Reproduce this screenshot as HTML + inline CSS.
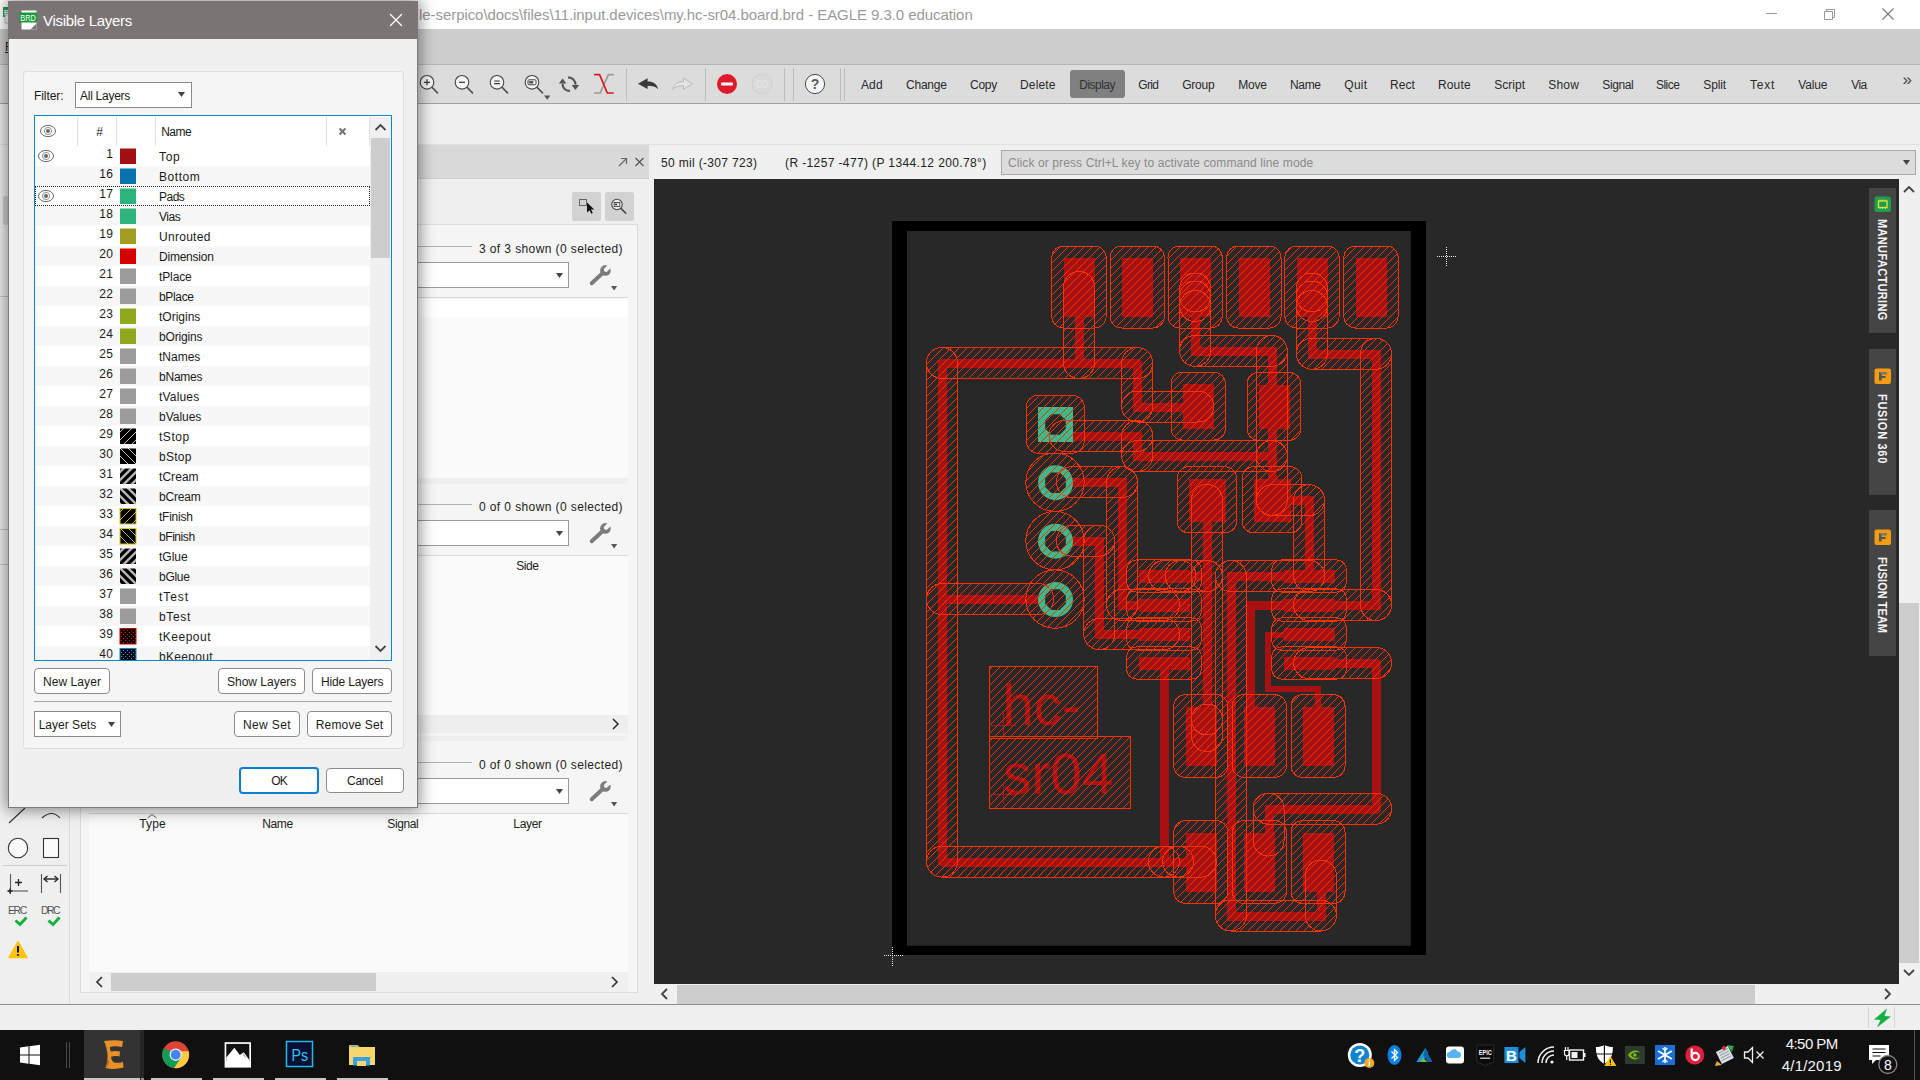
<!DOCTYPE html>
<html><head><meta charset="utf-8"><title>EAGLE</title>
<style>
html,body{margin:0;padding:0;width:1920px;height:1080px;overflow:hidden;background:#efefef;font-family:"Liberation Sans",sans-serif;}
.t{position:absolute;white-space:pre;}
.r{position:absolute;box-sizing:border-box;}
svg{position:absolute;overflow:visible;}
</style></head><body>
<div class="r" style="left:0px;top:0px;width:1920px;height:29px;background:#ffffff;"></div>
<svg style="left:0;top:4.500px" width="9" height="20"><rect x="3" y="2" width="8" height="10" fill="#2f9e4a"/><rect x="5" y="10" width="6" height="8" fill="#fff" stroke="#999" stroke-width="0.6"/><text x="4" y="10" font-size="7" fill="#fff" font-family="Liberation Sans" font-weight="bold">B</text></svg>
<div class="t" style="left:419.0px;top:4.0px;font-size:15px;line-height:21px;letter-spacing:-0.063px;color:#9a9a9a;font-weight:normal;">le-serpico\docs\files\11.input.devices\my.hc-sr04.board.brd - EAGLE 9.3.0 education</div>
<svg style="left:1750px;top:0" width="170" height="29"><path d="M16 13.5h11" stroke="#999" stroke-width="1" fill="none"/><path d="M74.5 11.5h8v8h-8z M76.5 11.5v-2h8v8h-2" stroke="#999" stroke-width="1" fill="none"/><path d="M132.5 8.5l11 11M143.5 8.5l-11 11" stroke="#777" stroke-width="1.1" fill="none"/></svg>
<div class="r" style="left:0px;top:29px;width:1920px;height:35px;background:#cdcdcd;"></div>
<div class="t" style="left:5.0px;top:39.3px;font-size:12px;line-height:17px;letter-spacing:-0.344px;color:#222;font-weight:normal;text-decoration:underline;">F</div>
<div class="r" style="left:0px;top:64px;width:1920px;height:1px;background:#b4b4b4;"></div>
<div class="r" style="left:0px;top:65px;width:1920px;height:38px;background:#dcdcdc;"></div>
<div class="r" style="left:0px;top:103px;width:1920px;height:1px;background:#a0a0a0;"></div>
<div class="r" style="left:0px;top:104px;width:1920px;height:41px;background:#efefef;"></div>
<div class="r" style="left:0px;top:144px;width:1920px;height:1px;background:#e2e2e2;"></div>
<svg style="left:0;top:0" width="1920" height="110"><g transform="translate(429.5,84.8)"><circle cx="-2.500" cy="-2.500" r="6.800" fill="#f4f4f4" stroke="#444" stroke-width="1.100"/><path d="M2.600 2.600L8 8" stroke="#555" stroke-width="1.700" stroke-linecap="round"/><path d="M-5.500 -2.500h6M-2.500 -5.500v6" stroke="#333" stroke-width="1.200"/></g><g transform="translate(464.5,84.8)"><circle cx="-2.500" cy="-2.500" r="6.800" fill="#f4f4f4" stroke="#444" stroke-width="1.100"/><path d="M2.600 2.600L8 8" stroke="#555" stroke-width="1.700" stroke-linecap="round"/><path d="M-5.500 -2.500h6" stroke="#333" stroke-width="1.200"/></g><g transform="translate(499.5,84.8)"><circle cx="-2.500" cy="-2.500" r="6.800" fill="#f4f4f4" stroke="#444" stroke-width="1.100"/><path d="M2.600 2.600L8 8" stroke="#555" stroke-width="1.700" stroke-linecap="round"/><path d="M-5.300 -3.800h5.600M-5.300 -1.200h5.600" stroke="#333" stroke-width="1.200"/></g><g transform="translate(534.5,84.8)"><circle cx="-2.500" cy="-2.500" r="6.800" fill="#f4f4f4" stroke="#444" stroke-width="1.100"/><path d="M2.600 2.600L8 8" stroke="#555" stroke-width="1.700" stroke-linecap="round"/><rect x="-6.500" y="-5" width="8" height="5" rx="1" fill="none" stroke="#444" stroke-width="1"/><rect x="-5.300" y="-3.800" width="4" height="2.600" fill="#555"/></g><path d="M544 95.500l3.200 4.200 3.200-4.200z" fill="#555"/><g transform="translate(569,84.200)" fill="none" stroke="#555" stroke-width="2.100"><path d="M1 6.600A6.600 6.600 0 0 1 -6.400 -0.500"/><path d="M-1 -6.600A6.600 6.600 0 0 1 6.400 0.500"/><path d="M-10.200 -0.800h7.600l-3.800 -5z" fill="#555" stroke="none"/><path d="M2.600 0.800h7.600l-3.800 5z" fill="#555" stroke="none"/></g><g fill="none" stroke-width="1.700"><path d="M613.800 74.700h-5.400l-8.200 18.300h-6.100" stroke="#9a9a9a"/><path d="M594.100 74.700h5.500l7.700 18.300h6.500" stroke="#d61a1a"/></g><path d="M626.5 68v33" stroke="#bdbdbd" stroke-width="1"/><path d="M705.5 68v33" stroke="#bdbdbd" stroke-width="1"/><path d="M784.5 68v33" stroke="#bdbdbd" stroke-width="1"/><path d="M793.5 68v33" stroke="#bdbdbd" stroke-width="1"/><path d="M840.5 68v33" stroke="#bdbdbd" stroke-width="1"/><path d="M844.5 68v33" stroke="#bdbdbd" stroke-width="1"/><path d="M638 83.700L647.600 78.300V81.500C653.500 81.500 657 84 658.200 89.300C655.500 86.500 652.500 85.800 647.600 85.800V89.100Z" fill="#3a3a3a"/><path d="M692.500 83.700L683.500 78.300V81.500C677.600 81.500 674.100 84 672.900 89.300C675.600 86.500 678.600 85.800 683.500 85.800V89.100Z" fill="#e4e4e4" stroke="#b5b5b5" stroke-width="0.900"/><circle cx="727" cy="84" r="10" fill="#e0192d"/><rect x="721" y="82.600" width="12" height="3" rx="1" fill="#fff"/><circle cx="762" cy="84" r="10" fill="#d9d9d9" stroke="#d0d0d0"/><text x="762" y="88" font-size="10.500" text-anchor="middle" fill="#e8e8e8" font-family="Liberation Sans" textLength="12" lengthAdjust="spacingAndGlyphs">GO</text><circle cx="815" cy="84" r="9.600" fill="#f6f6f6" stroke="#4a4a4a" stroke-width="1"/><text x="815" y="89" font-size="14" font-weight="bold" text-anchor="middle" fill="#5a5a5a" font-family="Liberation Sans">?</text></svg>
<div class="r" style="left:1070px;top:70px;width:55px;height:28px;background:#808080;border-radius:3px;"></div>
<div class="t" style="left:861.0px;top:76.8px;font-size:12px;line-height:17px;letter-spacing:0.114px;color:#2a2a2a;font-weight:normal;">Add</div>
<div class="t" style="left:906.0px;top:76.8px;font-size:12px;line-height:17px;letter-spacing:-0.224px;color:#2a2a2a;font-weight:normal;">Change</div>
<div class="t" style="left:970.0px;top:76.8px;font-size:12px;line-height:17px;letter-spacing:-0.254px;color:#2a2a2a;font-weight:normal;">Copy</div>
<div class="t" style="left:1020.0px;top:76.8px;font-size:12px;line-height:17px;letter-spacing:0.169px;color:#2a2a2a;font-weight:normal;">Delete</div>
<div class="t" style="left:1079.3px;top:76.8px;font-size:12px;line-height:17px;letter-spacing:-0.523px;color:#333;font-weight:normal;">Display</div>
<div class="t" style="left:1138.3px;top:76.8px;font-size:12px;line-height:17px;letter-spacing:-0.668px;color:#2a2a2a;font-weight:normal;">Grid</div>
<div class="t" style="left:1182.3px;top:76.8px;font-size:12px;line-height:17px;letter-spacing:-0.272px;color:#2a2a2a;font-weight:normal;">Group</div>
<div class="t" style="left:1238.3px;top:76.8px;font-size:12px;line-height:17px;letter-spacing:-0.236px;color:#2a2a2a;font-weight:normal;">Move</div>
<div class="t" style="left:1290.0px;top:76.8px;font-size:12px;line-height:17px;letter-spacing:-0.329px;color:#2a2a2a;font-weight:normal;">Name</div>
<div class="t" style="left:1344.3px;top:76.8px;font-size:12px;line-height:17px;letter-spacing:0.246px;color:#2a2a2a;font-weight:normal;">Quit</div>
<div class="t" style="left:1390.0px;top:76.8px;font-size:12px;line-height:17px;letter-spacing:0.078px;color:#2a2a2a;font-weight:normal;">Rect</div>
<div class="t" style="left:1438.0px;top:76.8px;font-size:12px;line-height:17px;letter-spacing:0.134px;color:#2a2a2a;font-weight:normal;">Route</div>
<div class="t" style="left:1494.3px;top:76.8px;font-size:12px;line-height:17px;letter-spacing:0.002px;color:#2a2a2a;font-weight:normal;">Script</div>
<div class="t" style="left:1548.3px;top:76.8px;font-size:12px;line-height:17px;letter-spacing:0.167px;color:#2a2a2a;font-weight:normal;">Show</div>
<div class="t" style="left:1602.3px;top:76.8px;font-size:12px;line-height:17px;letter-spacing:-0.393px;color:#2a2a2a;font-weight:normal;">Signal</div>
<div class="t" style="left:1656.0px;top:76.8px;font-size:12px;line-height:17px;letter-spacing:-0.543px;color:#2a2a2a;font-weight:normal;">Slice</div>
<div class="t" style="left:1703.3px;top:76.8px;font-size:12px;line-height:17px;letter-spacing:-0.129px;color:#2a2a2a;font-weight:normal;">Split</div>
<div class="t" style="left:1750.0px;top:76.8px;font-size:12px;line-height:17px;letter-spacing:0.746px;color:#2a2a2a;font-weight:normal;">Text</div>
<div class="t" style="left:1798.3px;top:76.8px;font-size:12px;line-height:17px;letter-spacing:-0.163px;color:#2a2a2a;font-weight:normal;">Value</div>
<div class="t" style="left:1851.3px;top:76.8px;font-size:12px;line-height:17px;letter-spacing:-0.580px;color:#2a2a2a;font-weight:normal;">Via</div>
<div class="t" style="left:1902.5px;top:68.3px;font-size:17px;line-height:24px;letter-spacing:-0.969px;color:#444;font-weight:normal;">»</div>
<div class="r" style="left:0px;top:145px;width:70px;height:860px;background:#efefef;"></div>
<div class="r" style="left:69px;top:145px;width:1px;height:860px;background:#dadada;"></div>
<div class="r" style="left:0px;top:529px;width:8px;height:1px;background:#c8c8c8;"></div>
<div class="r" style="left:0px;top:564px;width:8px;height:1px;background:#c8c8c8;"></div>
<div class="r" style="left:3px;top:196px;width:5px;height:29px;background:#d0d0d0;border-radius:2px;"></div>
<div class="r" style="left:0px;top:296px;width:8px;height:1px;background:#c8c8c8;"></div>
<svg style="left:0;top:790px" width="70" height="200" fill="none" stroke="#333" stroke-width="1.1"><path d="M9 33L25 18"/><path d="M42 28q10 -9 18 0"/><circle cx="18" cy="58" r="9.700" fill="#fafafa"/><rect x="43.500" y="48.500" width="15" height="19" fill="#fafafa"/><path d="M3 75.500h64" stroke="#cfcfcf"/><path d="M10.500 84v20" stroke="#555"/><path d="M8 101h20" stroke="#555"/><path d="M15 92.500h7M18.500 89v7" stroke="#222" stroke-width="1.300"/><path d="M7.500 101h5M10 98.500v5" stroke="#222" stroke-width="1.300"/><path d="M41.500 84v19M60.500 84v19" stroke="#555"/><path d="M44 89h14" stroke="#222" stroke-width="1.400"/><path d="M47.500 86l-3.500 3 3.500 3M54.500 86l3.500 3-3.500 3" stroke="#222" stroke-width="1.300"/><path d="M15.500 130.500l4.500 4 6.500-7" stroke="#12b23f" stroke-width="3"/><path d="M48.500 130.500l4.500 4 6.500-7" stroke="#12b23f" stroke-width="3"/><path d="M18 151.500l9 16h-18z" fill="#ffc20e" stroke="#ffc20e" stroke-width="1.500" stroke-linejoin="round"/><path d="M18 156v6.500" stroke="#111" stroke-width="2"/><circle cx="18" cy="165" r="1.100" fill="#111" stroke="none"/></svg>
<div class="t" style="left:8.0px;top:903.3px;font-size:10.5px;line-height:15px;letter-spacing:-1.391px;color:#555;font-weight:normal;">ERC</div>
<div class="t" style="left:41.0px;top:903.3px;font-size:10.5px;line-height:15px;letter-spacing:-1.583px;color:#555;font-weight:normal;">DRC</div>
<div class="r" style="left:70px;top:145px;width:584px;height:860px;background:#efefef;"></div>
<div class="r" style="left:70px;top:145px;width:579px;height:33px;background:#d9d9d9;"></div>
<div class="r" style="left:70px;top:178px;width:579px;height:1px;background:#cfcfcf;"></div>
<svg style="left:615px;top:154px" width="34" height="16" fill="none" stroke="#666" stroke-width="1.200"><path d="M4 12l7.500-7.500M6 4.500h5.500v5.500"/><path d="M20.500 4l8 8M28.500 4l-8 8" stroke="#555"/></svg>
<div class="r" style="left:80px;top:224px;width:558px;height:769px;background:#f5f5f5;border:1px solid #dcdcdc;"></div>
<div class="r" style="left:572px;top:192px;width:29px;height:29px;background:#d2d2d2;border-radius:2px;"></div>
<div class="r" style="left:605px;top:192px;width:29px;height:29px;background:#d2d2d2;border-radius:2px;"></div>
<svg style="left:572px;top:192px" width="62" height="29"><rect x="7.500" y="7.500" width="7" height="6" fill="none" stroke="#666"/><path d="M15 10.500v10l2.500-2.300 1.800 3.600 1.500-.8-1.800-3.400h3.300z" fill="#111"/><g transform="translate(47,14.500) scale(0.800)"><circle cx="-2.500" cy="-2.500" r="6.600" fill="#e8e8e8" stroke="#444" stroke-width="1.300"/><path d="M2.600 2.600L8.500 8.500" stroke="#444" stroke-width="2" stroke-linecap="round"/><rect x="-6" y="-5" width="7" height="5" fill="none" stroke="#333" stroke-width="1"/><rect x="-4.800" y="-3.600" width="2.400" height="2" fill="#333"/></g></svg>
<div class="r" style="left:418px;top:246px;width:54px;height:1px;background:#b0b0b0;"></div>
<div class="t" style="left:479.0px;top:240.9px;font-size:12px;line-height:17px;letter-spacing:0.397px;color:#222;font-weight:normal;">3 of 3 shown (0 selected)</div>
<div class="r" style="left:80px;top:261.5px;width:489px;height:26px;background:#ffffff;border:1px solid #9a9a9a;"></div>
<svg style="left:555px;top:272px" width="10" height="8"><path d="M1 1h7l-3.500 5z" fill="#444"/></svg>
<svg style="left:588px;top:264px" width="30" height="30"><g><path d="M3.700 19.300L15 8.800" stroke="#7c7c7c" stroke-width="3.900" stroke-linecap="round"/><circle cx="17.400" cy="6.400" r="5.300" fill="#7c7c7c"/><path transform="translate(17.400,6.400) rotate(-45)" d="M0.800 -2.100H8V2.100H0.800A2.100 2.100 0 0 1 0.800 -2.100Z" fill="#f5f5f5"/><path d="M23 22h6.200l-3.100 4.400z" fill="#555"/></g></svg>
<div class="r" style="left:89px;top:296.5px;width:539px;height:181px;background:#fafafa;border-top:1px solid #d8d8d8;"></div>
<div class="r" style="left:89px;top:298.5px;width:539px;height:18px;background:#ffffff;"></div>
<div class="r" style="left:89px;top:477.5px;width:539px;height:6px;background:#efefef;"></div>
<div class="r" style="left:418px;top:504px;width:54px;height:1px;background:#b0b0b0;"></div>
<div class="t" style="left:479.0px;top:498.9px;font-size:12px;line-height:17px;letter-spacing:0.397px;color:#222;font-weight:normal;">0 of 0 shown (0 selected)</div>
<div class="r" style="left:80px;top:519.5px;width:489px;height:26px;background:#ffffff;border:1px solid #9a9a9a;"></div>
<svg style="left:555px;top:530px" width="10" height="8"><path d="M1 1h7l-3.500 5z" fill="#444"/></svg>
<svg style="left:588px;top:522px" width="30" height="30"><g><path d="M3.700 19.300L15 8.800" stroke="#7c7c7c" stroke-width="3.900" stroke-linecap="round"/><circle cx="17.400" cy="6.400" r="5.300" fill="#7c7c7c"/><path transform="translate(17.400,6.400) rotate(-45)" d="M0.800 -2.100H8V2.100H0.800A2.100 2.100 0 0 1 0.800 -2.100Z" fill="#f5f5f5"/><path d="M23 22h6.200l-3.100 4.400z" fill="#555"/></g></svg>
<div class="r" style="left:89px;top:555px;width:539px;height:160px;background:#fafafa;border-top:1px solid #d8d8d8;"></div>
<div class="t" style="left:516.3px;top:557.6px;font-size:12px;line-height:17px;letter-spacing:-0.458px;color:#222;font-weight:normal;">Side</div>
<div class="r" style="left:89px;top:715px;width:539px;height:18px;background:#eeeeee;"></div>
<svg style="left:610px;top:717px" width="12" height="14"><path d="M3 2l5 5-5 5" fill="none" stroke="#333" stroke-width="1.600"/></svg>
<div class="r" style="left:89px;top:735.5px;width:539px;height:5px;background:#efefef;"></div>
<div class="r" style="left:418px;top:762px;width:54px;height:1px;background:#b0b0b0;"></div>
<div class="t" style="left:479.0px;top:756.9px;font-size:12px;line-height:17px;letter-spacing:0.397px;color:#222;font-weight:normal;">0 of 0 shown (0 selected)</div>
<div class="r" style="left:80px;top:777.5px;width:489px;height:26px;background:#ffffff;border:1px solid #9a9a9a;"></div>
<svg style="left:555px;top:788px" width="10" height="8"><path d="M1 1h7l-3.500 5z" fill="#444"/></svg>
<svg style="left:588px;top:780px" width="30" height="30"><g><path d="M3.700 19.300L15 8.800" stroke="#7c7c7c" stroke-width="3.900" stroke-linecap="round"/><circle cx="17.400" cy="6.400" r="5.300" fill="#7c7c7c"/><path transform="translate(17.400,6.400) rotate(-45)" d="M0.800 -2.100H8V2.100H0.800A2.100 2.100 0 0 1 0.800 -2.100Z" fill="#f5f5f5"/><path d="M23 22h6.200l-3.100 4.400z" fill="#555"/></g></svg>
<div class="r" style="left:89px;top:813px;width:539px;height:159px;background:#fafafa;border-top:1px solid #d8d8d8;"></div>
<div class="t" style="left:139.3px;top:816.3px;font-size:12px;line-height:17px;letter-spacing:0.096px;color:#222;font-weight:normal;">Type</div>
<svg style="left:146px;top:813px" width="12" height="6"><path d="M1.500 5l4.500-3.500 4.500 3.500" fill="none" stroke="#555" stroke-width="0.900"/></svg>
<div class="t" style="left:262.3px;top:816.3px;font-size:12px;line-height:17px;letter-spacing:-0.404px;color:#222;font-weight:normal;">Name</div>
<div class="t" style="left:387.3px;top:816.3px;font-size:12px;line-height:17px;letter-spacing:-0.393px;color:#222;font-weight:normal;">Signal</div>
<div class="t" style="left:513.3px;top:816.3px;font-size:12px;line-height:17px;letter-spacing:-0.326px;color:#222;font-weight:normal;">Layer</div>
<div class="r" style="left:89px;top:972px;width:539px;height:20px;background:#f0f0f0;"></div>
<div class="r" style="left:111px;top:973px;width:265px;height:18px;background:#cdcdcd;"></div>
<svg style="left:92px;top:974px" width="534" height="16" fill="none" stroke="#333" stroke-width="1.700"><path d="M10 3l-5 5 5 5"/><path d="M520 3l5 5-5 5"/></svg>
<div class="r" style="left:649px;top:145px;width:1271px;height:34px;background:#f0f0f0;"></div>
<div class="t" style="left:661.0px;top:154.8px;font-size:12px;line-height:17px;letter-spacing:0.328px;color:#222;font-weight:normal;">50 mil (-307 723)</div>
<div class="t" style="left:785.0px;top:154.8px;font-size:12px;line-height:17px;letter-spacing:0.382px;color:#222;font-weight:normal;">(R -1257 -477) (P 1344.12 200.78°)</div>
<div class="r" style="left:1001px;top:149.5px;width:915px;height:25px;background:#dcdcdc;border:1px solid #a9a9a9;"></div>
<div class="t" style="left:1008.0px;top:154.8px;font-size:12px;line-height:17px;letter-spacing:0.108px;color:#8a8a8a;font-weight:normal;">Click or press Ctrl+L key to activate command line mode</div>
<svg style="left:1902px;top:159px" width="10" height="8"><path d="M1 1h7l-3.500 5z" fill="#444"/></svg>
<div class="r" style="left:1899px;top:179px;width:21px;height:805px;background:#f0f0f0;"></div>
<div class="r" style="left:1899px;top:603px;width:20px;height:360px;background:#cdcdcd;"></div>
<svg style="left:1899px;top:179px" width="21" height="805" fill="none" stroke="#444" stroke-width="1.800"><path d="M5 13l5-5 5 5"/><path d="M5 791l5 5 5-5"/></svg>
<div class="r" style="left:654px;top:984px;width:1266px;height:21px;background:#f0f0f0;"></div>
<div class="r" style="left:677px;top:985px;width:1078px;height:19px;background:#cdcdcd;"></div>
<svg style="left:654px;top:984px" width="1245" height="21" fill="none" stroke="#444" stroke-width="1.800"><path d="M13 5l-5 5 5 5"/><path d="M1231 5l5 5-5 5"/></svg>
<div class="r" style="left:0px;top:1004px;width:1920px;height:1px;background:#8e8e8e;"></div>
<div class="r" style="left:0px;top:1005px;width:1920px;height:25px;background:#efefef;"></div>
<div class="r" style="left:1868px;top:1007px;width:1px;height:21px;background:#d5d5d5;"></div>
<div class="r" style="left:1894px;top:1007px;width:1px;height:21px;background:#d5d5d5;"></div>
<svg style="left:1872px;top:1007px" width="22" height="22"><path d="M15 1.500L2 12.500l6.500 0.500-3.500 7.500L19 9.500l-6.500-0.500z" fill="#12b23f"/></svg>
<div class="r" style="left:0px;top:1030px;width:1920px;height:50px;background:#101010;"></div>
<div class="r" style="left:84px;top:1030px;width:56px;height:50px;background:#333333;"></div>
<div class="r" style="left:140px;top:1030px;width:4px;height:50px;background:#262626;"></div>
<div class="r" style="left:84px;top:1077.5px;width:56px;height:2.5px;background:#cdc3c3;"></div>
<div class="r" style="left:141px;top:1077.5px;width:3px;height:2.5px;background:#9a9292;"></div>
<div class="r" style="left:151px;top:1077.5px;width:51px;height:2.5px;background:#cdc3c3;"></div>
<div class="r" style="left:213px;top:1077.5px;width:51px;height:2.5px;background:#cdc3c3;"></div>
<div class="r" style="left:275px;top:1077.5px;width:51px;height:2.5px;background:#cdc3c3;"></div>
<div class="r" style="left:337px;top:1077.5px;width:51px;height:2.5px;background:#cdc3c3;"></div>
<div class="r" style="left:66px;top:1042px;width:1px;height:26px;background:#4a4a4a;"></div>
<div class="r" style="left:69px;top:1042px;width:1px;height:26px;background:#4a4a4a;"></div>
<svg style="left:0;top:1030px" width="420" height="50"><path d="M20 17.500l8.500-1.200v8.200h-8.500z M29.500 16.200l10.500-1.500v9.800h-10.500z M20 25.500h8.500v8.200l-8.500-1.200z M29.500 25.500h10.500v9.800l-10.500-1.500z" fill="#fff"/><path d="M104 11c7-1 13-1 19 0l-1 6c-5-1-9-1-12 0 0 2 0 3 1 4.500 3-.8 6-.8 9 0l-.5 5c-3-.6-6-.6-8.500.2 .3 2.500 1 4 2.500 5.500 3 1 6 .8 9.500-.2l.5 5.500c-6 1.800-12 2-18 .5 3-8 3-18-1.500-27z" fill="#e8912a"/><path d="M104 11c4.500 9 4.500 19 1.500 27 2-1 3-3 3.500-6-2-6-2-13-5-21z" fill="#b5651a"/><g transform="translate(175.700,24.700)"><circle r="13.500" fill="#db4437"/><path d="M0 0L-11.700 -6.750A13.500 13.500 0 0 0 -1.500 13.400L5.200 3z" fill="#0f9d58"/><path d="M0 0L5.200 3 -1.500 13.400A13.500 13.500 0 0 0 13 -3.500L0 -3.500z" fill="#ffcd40"/><circle r="6.200" fill="#f1f1f1"/><circle r="4.900" fill="#4285f4"/></g><rect x="224.600" y="12.200" width="26.400" height="25.400" fill="#fff"/><rect x="226.300" y="13.900" width="23" height="18" fill="#101010"/><path d="M226.300 27.500L234.400 17.800L239.800 25L243.800 22.300L249.300 30V33H226.300Z" fill="#fff"/><path d="M243.800 22.300l2.500 6.500-3.600-3.200z" fill="#bbb"/><rect x="286.500" y="11.500" width="26" height="25" fill="#0a1033" stroke="#27b7f0" stroke-width="1.500"/><text x="291.500" y="30.500" font-size="16.500" fill="#31c5f4" font-family="Liberation Sans" textLength="16.500" lengthAdjust="spacingAndGlyphs">Ps</text><path d="M349 15h8l2.500 2h15.500v18h-26z" fill="#f7d66b"/><path d="M349 15h8l2.500 2h-10.500z" fill="#e8b93d"/><rect x="353" y="27" width="17" height="8.500" fill="#3aa0e6"/><rect x="357" y="31" width="9" height="5" fill="#f7d66b"/><rect x="351" y="15.500" width="5" height="1.500" fill="#5bb4ee"/></svg>
<svg style="left:1340px;top:1030px" width="580" height="50" font-family="Liberation Sans"><g transform="translate(19.799999999999955,25)"><circle r="12" fill="#fff"/><circle r="9.500" fill="#0a84d0"/><text y="6.500" font-size="18" font-weight="bold" text-anchor="middle" fill="#fff">?</text><circle cx="9.500" cy="8" r="5" fill="#f5a623"/><rect x="8.800" y="6.500" width="1.500" height="4.500" fill="#fff"/><rect x="8.800" y="4.500" width="1.500" height="1.300" fill="#fff"/></g><g transform="translate(54.5,25)"><ellipse rx="7" ry="10" fill="#0a7fe0"/><path d="M-3 -3.500l6 6-3 3v-11l3 3-6 6" fill="none" stroke="#fff" stroke-width="1.300"/></g><g transform="translate(84.29999999999995,25)"><path d="M-8 7l9-14 3 5-6 9z" fill="#1f9ad6"/><path d="M1 -7l7 14h-5l-4-7z" fill="#0c63a8"/><path d="M-4 7l3-4 4 4z" fill="#7cc242"/></g><g transform="translate(115,25)"><rect x="-9" y="-8.500" width="18" height="17" rx="3" fill="#fff"/><path d="M-5.500 3a3 3 0 0 1 .5-6 4 4 0 0 1 7.500-.5 3.300 3.300 0 0 1 1 6.500z" fill="#57b3f5"/></g><g transform="translate(145.20000000000005,25)"><path d="M-8.500 -10h17v17l-8.500 3.500-8.500-3.500z" fill="#0b0b0b" stroke="#2b2b2b"/><text y="-0.500" font-size="8" font-weight="bold" text-anchor="middle" fill="#fff" textLength="13" lengthAdjust="spacingAndGlyphs">EPIC</text><rect x="-5" y="2.500" width="10" height="1.500" fill="#bbb"/></g><g transform="translate(174.4000000000001,25)"><rect x="-10" y="-8" width="14" height="16" fill="#1d8fd8"/><text x="-3" y="6" font-size="15" font-weight="bold" text-anchor="middle" fill="#fff">B</text><path d="M5 -3l6-5v16l-6-5z" fill="#1d8fd8"/></g><g transform="translate(206,25)" fill="none" stroke="#f2f2f2" stroke-width="1.500"><path d="M-8 8a16 16 0 0 1 16-16"/><path d="M-4 8a12 12 0 0 1 12-12"/><path d="M0 8a8 8 0 0 1 8-8"/><circle cx="6" cy="7" r="1.600" fill="#f2f2f2" stroke="none"/></g><g transform="translate(235,25)"><rect x="-5.500" y="-5" width="14" height="10" fill="none" stroke="#f2f2f2" stroke-width="1.400"/><rect x="8.500" y="-2" width="2" height="4" fill="#f2f2f2"/><rect x="-3.500" y="-3" width="6" height="6" fill="#f2f2f2"/><path d="M-9.500 -8v3.500M-7 -8v3.500M-10.500 -4.500h4.500v3a2.200 2.200 0 0 1-4.500 0zM-8.300 1v4" stroke="#f2f2f2" stroke-width="1.200" fill="none"/></g><g transform="translate(264.4000000000001,25)"><path d="M0 -10c3 1.500 5.500 2 8.500 2 0 8-2 13.500-8.500 17-6.500-3.500-8.500-9-8.500-17 3 0 5.500-.5 8.500-2z" fill="#fff"/><path d="M0 -10v19M-8.500 -1h17" stroke="#101010" stroke-width="1.200"/><path d="M6 1l6 10h-12z" fill="#ffc20e"/><rect x="5.400" y="4.500" width="1.200" height="3.500" fill="#111"/><rect x="5.400" y="8.700" width="1.200" height="1.200" fill="#111"/></g><g transform="translate(294.9000000000001,25)"><rect x="-10" y="-9" width="20" height="18" fill="#2d3a2d"/><path d="M-7 0c3-5 9-6 13-2-3-2-8-1-10 2 2 3 6 4 9 2-3 4-9 3-12-2z" fill="#76b900"/><circle cx="0" cy="0" r="1.800" fill="#76b900"/></g><g transform="translate(325,25)"><rect x="-10" y="-10" width="20" height="20" fill="#1a6fd4"/><g stroke="#fff" stroke-width="1.600"><path d="M0 -8v16M-7 -4l14 8M-7 4l14-8"/><path d="M-2.500 -7l2.500 2.500 2.500-2.500M-2.500 7l2.500-2.500 2.500 2.500" fill="none" stroke-width="1.100"/></g></g><g transform="translate(354.79999999999995,25)"><circle r="9.500" fill="#e01f3d"/><circle cx="0.500" cy="1.500" r="3.600" fill="none" stroke="#fff" stroke-width="2.200"/><path d="M-3.100 1.500v-8" stroke="#fff" stroke-width="2.200"/></g><g transform="translate(384.9000000000001,25)"><path d="M-9 -3l12-6 6 12-12 6z" fill="#d9dde2"/><path d="M-6 -2l9-4.500M-5 0.500l9-4.500M-4 3l9-4.500M-3 5.500l9-4.500" stroke="#8d96a0" stroke-width="1"/><path d="M2 -10l7 1-2 6z" fill="#2ea44f"/><circle cx="-1" cy="-7" r="2" fill="#d0342c"/><path d="M-8 6l5 4-7 1z" fill="#e0b040"/></g><g transform="translate(414,25)" fill="none" stroke="#f2f2f2" stroke-width="1.300"><path d="M-9.500 -3h3.500l4.500-4.500v15l-4.500-4.500h-3.500z"/><path d="M2.500 -3.500l7 7M9.500 -3.500l-7 7"/></g><g transform="translate(539,23.500)"><path d="M-10 -8.500h20v15h-13l-4 4v-4h-3z" fill="#fff"/><path d="M-6.500 -4.500h13M-6.500 -1h13M-6.500 2.500h8" stroke="#101010" stroke-width="1.200"/></g><circle cx="547.8" cy="34.500" r="9" fill="#101010" stroke="#8a8a8a" stroke-width="1.300"/><text x="547.8" y="39.500" font-size="14" text-anchor="middle" fill="#fff">8</text></svg>
<div class="t" style="left:1785.7px;top:1033.1px;font-size:15px;line-height:21px;letter-spacing:-0.554px;color:#f4f4f4;font-weight:normal;">4:50 PM</div>
<div class="t" style="left:1781.8px;top:1055.1px;font-size:15px;line-height:21px;letter-spacing:0.189px;color:#f4f4f4;font-weight:normal;">4/1/2019</div>
<div class="r" style="left:1914px;top:1030px;width:1px;height:50px;background:#555;"></div>
<svg style="left:0;top:0" width="1920" height="1080" viewBox="0 0 1920 1080"><defs><pattern id="hp" width="8" height="8" patternUnits="userSpaceOnUse" patternTransform="translate(3,0)"><g fill="#ff3000" shape-rendering="crispEdges"><rect x="0" y="7" width="1" height="1"/><rect x="1" y="6" width="1" height="1"/><rect x="2" y="5" width="1" height="1"/><rect x="3" y="4" width="1" height="1"/><rect x="4" y="3" width="1" height="1"/><rect x="5" y="2" width="1" height="1"/><rect x="6" y="1" width="1" height="1"/><rect x="7" y="0" width="1" height="1"/></g></pattern><clipPath id="hc"><path transform="translate(-0.5,-0.5)" d="M1063.9 246.5h31.2a11.5 11.5 0 0 1 11.5 11.5v59.0a11.5 11.5 0 0 1 -11.5 11.5h-31.2a11.5 11.5 0 0 1 -11.5 -11.5v-59.0a11.5 11.5 0 0 1 11.5 -11.5Z M1122.1 246.5h31.2a11.5 11.5 0 0 1 11.5 11.5v59.0a11.5 11.5 0 0 1 -11.5 11.5h-31.2a11.5 11.5 0 0 1 -11.5 -11.5v-59.0a11.5 11.5 0 0 1 11.5 -11.5Z M1180.0 246.5h31.2a11.5 11.5 0 0 1 11.5 11.5v59.0a11.5 11.5 0 0 1 -11.5 11.5h-31.2a11.5 11.5 0 0 1 -11.5 -11.5v-59.0a11.5 11.5 0 0 1 11.5 -11.5Z M1238.8 246.5h31.2a11.5 11.5 0 0 1 11.5 11.5v59.0a11.5 11.5 0 0 1 -11.5 11.5h-31.2a11.5 11.5 0 0 1 -11.5 -11.5v-59.0a11.5 11.5 0 0 1 11.5 -11.5Z M1296.9 246.5h31.2a11.5 11.5 0 0 1 11.5 11.5v59.0a11.5 11.5 0 0 1 -11.5 11.5h-31.2a11.5 11.5 0 0 1 -11.5 -11.5v-59.0a11.5 11.5 0 0 1 11.5 -11.5Z M1355.9 246.5h31.2a11.5 11.5 0 0 1 11.5 11.5v59.0a11.5 11.5 0 0 1 -11.5 11.5h-31.2a11.5 11.5 0 0 1 -11.5 -11.5v-59.0a11.5 11.5 0 0 1 11.5 -11.5Z M1183.0 372.7h31.3a11.5 11.5 0 0 1 11.5 11.5v44.8a11.5 11.5 0 0 1 -11.5 11.5h-31.3a11.5 11.5 0 0 1 -11.5 -11.5v-44.8a11.5 11.5 0 0 1 11.5 -11.5Z M1259.1 373.0h30.6a11.5 11.5 0 0 1 11.5 11.5v44.8a11.5 11.5 0 0 1 -11.5 11.5h-30.6a11.5 11.5 0 0 1 -11.5 -11.5v-44.8a11.5 11.5 0 0 1 11.5 -11.5Z M1189.2 467.3h36.4a11.5 11.5 0 0 1 11.5 11.5v43.0a11.5 11.5 0 0 1 -11.5 11.5h-36.4a11.5 11.5 0 0 1 -11.5 -11.5v-43.0a11.5 11.5 0 0 1 11.5 -11.5Z M1254.2 467.3h36.6a11.5 11.5 0 0 1 11.5 11.5v43.0a11.5 11.5 0 0 1 -11.5 11.5h-36.6a11.5 11.5 0 0 1 -11.5 -11.5v-43.0a11.5 11.5 0 0 1 11.5 -11.5Z M1136.9 560.4h55.4a9.6 9.6 0 0 1 9.6 9.6v13.0a9.6 9.6 0 0 1 -9.6 9.6h-55.4a9.6 9.6 0 0 1 -9.6 -9.6v-13.0a9.6 9.6 0 0 1 9.6 -9.6Z M1281.9 560.4h55.4a9.6 9.6 0 0 1 9.6 9.6v13.0a9.6 9.6 0 0 1 -9.6 9.6h-55.4a9.6 9.6 0 0 1 -9.6 -9.6v-13.0a9.6 9.6 0 0 1 9.6 -9.6Z M1136.9 589.4h55.4a9.6 9.6 0 0 1 9.6 9.6v13.0a9.6 9.6 0 0 1 -9.6 9.6h-55.4a9.6 9.6 0 0 1 -9.6 -9.6v-13.0a9.6 9.6 0 0 1 9.6 -9.6Z M1281.9 589.4h55.4a9.6 9.6 0 0 1 9.6 9.6v13.0a9.6 9.6 0 0 1 -9.6 9.6h-55.4a9.6 9.6 0 0 1 -9.6 -9.6v-13.0a9.6 9.6 0 0 1 9.6 -9.6Z M1136.9 618.4h55.4a9.6 9.6 0 0 1 9.6 9.6v13.0a9.6 9.6 0 0 1 -9.6 9.6h-55.4a9.6 9.6 0 0 1 -9.6 -9.6v-13.0a9.6 9.6 0 0 1 9.6 -9.6Z M1281.9 618.4h55.4a9.6 9.6 0 0 1 9.6 9.6v13.0a9.6 9.6 0 0 1 -9.6 9.6h-55.4a9.6 9.6 0 0 1 -9.6 -9.6v-13.0a9.6 9.6 0 0 1 9.6 -9.6Z M1136.9 647.4h55.4a9.6 9.6 0 0 1 9.6 9.6v13.0a9.6 9.6 0 0 1 -9.6 9.6h-55.4a9.6 9.6 0 0 1 -9.6 -9.6v-13.0a9.6 9.6 0 0 1 9.6 -9.6Z M1281.9 647.4h55.4a9.6 9.6 0 0 1 9.6 9.6v13.0a9.6 9.6 0 0 1 -9.6 9.6h-55.4a9.6 9.6 0 0 1 -9.6 -9.6v-13.0a9.6 9.6 0 0 1 9.6 -9.6Z M1185.8 695.2h31.0a11.5 11.5 0 0 1 11.5 11.5v59.6a11.5 11.5 0 0 1 -11.5 11.5h-31.0a11.5 11.5 0 0 1 -11.5 -11.5v-59.6a11.5 11.5 0 0 1 11.5 -11.5Z M1185.8 821.2h31.0a11.5 11.5 0 0 1 11.5 11.5v59.6a11.5 11.5 0 0 1 -11.5 11.5h-31.0a11.5 11.5 0 0 1 -11.5 -11.5v-59.6a11.5 11.5 0 0 1 11.5 -11.5Z M1244.4 695.2h31.0a11.5 11.5 0 0 1 11.5 11.5v59.6a11.5 11.5 0 0 1 -11.5 11.5h-31.0a11.5 11.5 0 0 1 -11.5 -11.5v-59.6a11.5 11.5 0 0 1 11.5 -11.5Z M1244.4 821.2h31.0a11.5 11.5 0 0 1 11.5 11.5v59.6a11.5 11.5 0 0 1 -11.5 11.5h-31.0a11.5 11.5 0 0 1 -11.5 -11.5v-59.6a11.5 11.5 0 0 1 11.5 -11.5Z M1303.0 695.2h31.0a11.5 11.5 0 0 1 11.5 11.5v59.6a11.5 11.5 0 0 1 -11.5 11.5h-31.0a11.5 11.5 0 0 1 -11.5 -11.5v-59.6a11.5 11.5 0 0 1 11.5 -11.5Z M1303.0 821.2h31.0a11.5 11.5 0 0 1 11.5 11.5v59.6a11.5 11.5 0 0 1 -11.5 11.5h-31.0a11.5 11.5 0 0 1 -11.5 -11.5v-59.6a11.5 11.5 0 0 1 11.5 -11.5Z M1064.0 287.5A15.5 15.5 0 0 1 1095.0 287.5L1095.0 363.5A15.5 15.5 0 0 1 1064.0 363.5Z M942.5 379.0A15.5 15.5 0 0 1 942.5 348.0L1137.7 348.0A15.5 15.5 0 0 1 1137.7 379.0Z M927.0 363.5A15.5 15.5 0 0 1 958.0 363.5L958.0 862.1A15.5 15.5 0 0 1 927.0 862.1Z M942.5 877.6A15.5 15.5 0 0 1 942.5 846.6L1164.4 846.6A15.5 15.5 0 0 1 1164.4 877.6Z M1164.4 877.6A15.5 15.5 0 0 1 1164.4 846.6L1178.6 846.6A15.5 15.5 0 0 1 1178.6 877.6Z M1178.6 877.6A15.5 15.5 0 0 1 1178.6 846.6L1201.3 846.6A15.5 15.5 0 0 1 1201.3 877.6Z M1122.2 363.5A15.5 15.5 0 0 1 1153.2 363.5L1153.2 407.0A15.5 15.5 0 0 1 1122.2 407.0Z M1137.7 422.5A15.5 15.5 0 0 1 1137.7 391.5L1198.7 391.5A15.5 15.5 0 0 1 1198.7 422.5Z M1065.0 451.9A15.5 15.5 0 0 1 1065.0 420.9L1137.7 420.9A15.5 15.5 0 0 1 1137.7 451.9Z M1122.2 436.4A15.5 15.5 0 0 1 1153.2 436.4L1153.2 456.6A15.5 15.5 0 0 1 1122.2 456.6Z M1137.7 472.1A15.5 15.5 0 0 1 1137.7 441.1L1272.3 441.1A15.5 15.5 0 0 1 1272.3 472.1Z M1180.1 289.0A15.5 15.5 0 0 1 1211.1 289.0L1211.1 297.0A15.5 15.5 0 0 1 1180.1 297.0Z M1180.1 297.0A15.5 15.5 0 0 1 1211.1 297.0L1211.1 306.5A15.5 15.5 0 0 1 1180.1 306.5Z M1180.1 306.5A15.5 15.5 0 0 1 1211.1 306.5L1211.1 351.4A15.5 15.5 0 0 1 1180.1 351.4Z M1195.6 366.9A15.5 15.5 0 0 1 1195.6 335.9L1272.3 335.9A15.5 15.5 0 0 1 1272.3 366.9Z M1256.8 351.4A15.5 15.5 0 0 1 1287.8 351.4L1287.8 456.6A15.5 15.5 0 0 1 1256.8 456.6Z M1256.8 456.6A15.5 15.5 0 0 1 1287.8 456.6L1287.8 500.3A15.5 15.5 0 0 1 1256.8 500.3Z M1296.9 289.0A15.5 15.5 0 0 1 1327.9 289.0L1327.9 297.0A15.5 15.5 0 0 1 1296.9 297.0Z M1296.9 297.0A15.5 15.5 0 0 1 1327.9 297.0L1327.9 306.5A15.5 15.5 0 0 1 1296.9 306.5Z M1296.9 306.5A15.5 15.5 0 0 1 1327.9 306.5L1327.9 354.3A15.5 15.5 0 0 1 1296.9 354.3Z M1312.4 369.8A15.5 15.5 0 0 1 1312.4 338.8L1376.5 338.8A15.5 15.5 0 0 1 1376.5 369.8Z M1361.0 354.3A15.5 15.5 0 0 1 1392.0 354.3L1392.0 605.5A15.5 15.5 0 0 1 1361.0 605.5Z M1376.5 590.0A15.5 15.5 0 0 1 1376.5 621.0L1309.6 621.0A15.5 15.5 0 0 1 1309.6 590.0Z M1272.5 516.2A15.5 15.5 0 0 1 1272.5 485.2L1309.6 485.2A15.5 15.5 0 0 1 1309.6 516.2Z M1294.1 500.7A15.5 15.5 0 0 1 1325.1 500.7L1325.1 576.5A15.5 15.5 0 0 1 1294.1 576.5Z M1191.9 500.3A15.5 15.5 0 0 1 1222.9 500.3L1222.9 576.5A15.5 15.5 0 0 1 1191.9 576.5Z M1191.9 576.5A15.5 15.5 0 0 1 1222.9 576.5L1222.9 720.0A15.5 15.5 0 0 1 1191.9 720.0Z M1191.9 720.0A15.5 15.5 0 0 1 1222.9 720.0L1222.9 736.5A15.5 15.5 0 0 1 1191.9 736.5Z M1207.4 561.0A15.5 15.5 0 0 1 1207.4 592.0L1181.0 592.0A15.5 15.5 0 0 1 1181.0 561.0Z M1181.0 561.0A15.5 15.5 0 0 1 1181.0 592.0L1164.6 592.0A15.5 15.5 0 0 1 1164.6 561.0Z M1072.4 498.2A15.5 15.5 0 0 1 1072.4 467.2L1122.5 467.2A15.5 15.5 0 0 1 1122.5 498.2Z M1107.0 482.7A15.5 15.5 0 0 1 1138.0 482.7L1138.0 605.5A15.5 15.5 0 0 1 1107.0 605.5Z M1122.5 621.0A15.5 15.5 0 0 1 1122.5 590.0L1164.6 590.0A15.5 15.5 0 0 1 1164.6 621.0Z M1072.4 556.7A15.5 15.5 0 0 1 1072.4 525.7L1099.7 525.7A15.5 15.5 0 0 1 1099.7 556.7Z M1084.2 541.2A15.5 15.5 0 0 1 1115.2 541.2L1115.2 634.5A15.5 15.5 0 0 1 1084.2 634.5Z M1099.7 650.0A15.5 15.5 0 0 1 1099.7 619.0L1164.6 619.0A15.5 15.5 0 0 1 1164.6 650.0Z M1038.6 584.1A15.5 15.5 0 0 1 1038.6 615.1L942.5 615.1A15.5 15.5 0 0 1 942.5 584.1Z M1309.6 561.0A15.5 15.5 0 0 1 1309.6 592.0L1231.3 592.0A15.5 15.5 0 0 1 1231.3 561.0Z M1215.8 576.5A15.5 15.5 0 0 1 1246.8 576.5L1246.8 916.0A15.5 15.5 0 0 1 1215.8 916.0Z M1231.3 931.5A15.5 15.5 0 0 1 1231.3 900.5L1321.3 900.5A15.5 15.5 0 0 1 1321.3 931.5Z M1336.8 916.0A15.5 15.5 0 0 1 1305.8 916.0L1305.8 876.0A15.5 15.5 0 0 1 1336.8 876.0Z M1309.6 679.0A15.5 15.5 0 0 1 1309.6 648.0L1376.6 648.0A15.5 15.5 0 0 1 1376.6 679.0Z M1376.6 793.7A15.5 15.5 0 0 1 1376.6 824.7L1269.0 824.7A15.5 15.5 0 0 1 1269.0 793.7Z M1253.5 809.2A15.5 15.5 0 0 1 1284.5 809.2L1284.5 841.0A15.5 15.5 0 0 1 1253.5 841.0Z M1038.8 395.8h33.9a12.0 12.0 0 0 1 12.0 12.0v33.9a12.0 12.0 0 0 1 -12.0 12.0h-33.9a12.0 12.0 0 0 1 -12.0 -12.0v-33.9a12.0 12.0 0 0 1 12.0 -12.0Z M1026.3 482.7a29.2 29.2 0 1 1 58.4 0a29.2 29.2 0 1 1 -58.4 0Z M1026.3 541.2a29.2 29.2 0 1 1 58.4 0a29.2 29.2 0 1 1 -58.4 0Z M1026.3 599.6a29.2 29.2 0 1 1 58.4 0a29.2 29.2 0 1 1 -58.4 0Z M990 667.3H1098.4V739.3H990Z M990 737.3H1131.4V809.3H990Z" clip-rule="nonzero"/></clipPath></defs><rect x="654" y="179" width="1245" height="805" fill="#282828"/><path d="M892 221H1426V955H892Z M907 231V945.7H1410.800V231Z" fill="#000" fill-rule="evenodd"/><g fill="none" stroke="#a81111" shape-rendering="crispEdges"><rect x="1063.9" y="258.0" width="31.2" height="59.0" fill="#a81111" stroke="none"/><rect x="1122.1" y="258.0" width="31.2" height="59.0" fill="#a81111" stroke="none"/><rect x="1180.0" y="258.0" width="31.2" height="59.0" fill="#a81111" stroke="none"/><rect x="1238.8" y="258.0" width="31.2" height="59.0" fill="#a81111" stroke="none"/><rect x="1296.9" y="258.0" width="31.2" height="59.0" fill="#a81111" stroke="none"/><rect x="1355.9" y="258.0" width="31.2" height="59.0" fill="#a81111" stroke="none"/><rect x="1183.0" y="384.2" width="31.3" height="44.8" fill="#a81111" stroke="none"/><rect x="1259.1" y="384.5" width="30.6" height="44.8" fill="#a81111" stroke="none"/><rect x="1189.2" y="478.8" width="36.4" height="43.0" fill="#a81111" stroke="none"/><rect x="1254.2" y="478.8" width="36.6" height="43.0" fill="#a81111" stroke="none"/><rect x="1139.2" y="570.0" width="50.8" height="13.0" fill="#a81111" stroke="none"/><rect x="1284.2" y="570.0" width="50.8" height="13.0" fill="#a81111" stroke="none"/><rect x="1139.2" y="599.0" width="50.8" height="13.0" fill="#a81111" stroke="none"/><rect x="1284.2" y="599.0" width="50.8" height="13.0" fill="#a81111" stroke="none"/><rect x="1139.2" y="628.0" width="50.8" height="13.0" fill="#a81111" stroke="none"/><rect x="1284.2" y="628.0" width="50.8" height="13.0" fill="#a81111" stroke="none"/><rect x="1139.2" y="657.0" width="50.8" height="13.0" fill="#a81111" stroke="none"/><rect x="1284.2" y="657.0" width="50.8" height="13.0" fill="#a81111" stroke="none"/><rect x="1185.8" y="706.7" width="31.0" height="59.6" fill="#a81111" stroke="none"/><rect x="1185.8" y="832.7" width="31.0" height="59.6" fill="#a81111" stroke="none"/><rect x="1244.4" y="706.7" width="31.0" height="59.6" fill="#a81111" stroke="none"/><rect x="1244.4" y="832.7" width="31.0" height="59.6" fill="#a81111" stroke="none"/><rect x="1303.0" y="706.7" width="31.0" height="59.6" fill="#a81111" stroke="none"/><rect x="1303.0" y="832.7" width="31.0" height="59.6" fill="#a81111" stroke="none"/><path d="M1079.5 287.5L1079.5 363.5" stroke-width="9" stroke-linecap="round" stroke-linejoin="miter"/><path d="M942.5 363.5L1137.7 363.5" stroke-width="9" stroke-linecap="round" stroke-linejoin="miter"/><path d="M942.5 363.5L942.5 862.1" stroke-width="9" stroke-linecap="round" stroke-linejoin="miter"/><path d="M942.5 862.1L1164.4 862.1L1178.6 862.1L1201.3 862.1" stroke-width="9" stroke-linecap="round" stroke-linejoin="miter"/><path d="M1137.7 363.5L1137.7 407.0L1198.7 407.0" stroke-width="9" stroke-linecap="round" stroke-linejoin="miter"/><path d="M1055.5 424.5L1065.0 436.4" stroke-width="9" stroke-linecap="round" stroke-linejoin="miter"/><path d="M1065.0 436.4L1137.7 436.4L1137.7 456.6L1272.3 456.6" stroke-width="9" stroke-linecap="round" stroke-linejoin="miter"/><path d="M1195.6 289.0L1195.6 297.0L1195.6 306.5L1195.6 351.4L1272.3 351.4L1272.3 456.6L1272.3 500.3" stroke-width="9" stroke-linecap="round" stroke-linejoin="miter"/><path d="M1312.4 289.0L1312.4 297.0L1312.4 306.5L1312.4 354.3L1376.5 354.3L1376.5 605.5L1309.6 605.5" stroke-width="9" stroke-linecap="round" stroke-linejoin="miter"/><path d="M1272.5 500.7L1309.6 500.7L1309.6 576.5" stroke-width="9" stroke-linecap="round" stroke-linejoin="miter"/><path d="M1207.4 500.3L1207.4 576.5L1207.4 720.0L1207.4 736.5" stroke-width="9" stroke-linecap="round" stroke-linejoin="miter"/><path d="M1207.4 576.5L1181.0 576.5L1164.6 576.5" stroke-width="9" stroke-linecap="round" stroke-linejoin="miter"/><path d="M1055.5 482.7L1072.4 482.7" stroke-width="9" stroke-linecap="round" stroke-linejoin="miter"/><path d="M1072.4 482.7L1122.5 482.7L1122.5 605.5L1164.6 605.5" stroke-width="9" stroke-linecap="round" stroke-linejoin="miter"/><path d="M1055.5 541.2L1072.4 541.2" stroke-width="9" stroke-linecap="round" stroke-linejoin="miter"/><path d="M1072.4 541.2L1099.7 541.2L1099.7 634.5L1164.6 634.5" stroke-width="9" stroke-linecap="round" stroke-linejoin="miter"/><path d="M1055.5 599.6L1038.6 599.6" stroke-width="9" stroke-linecap="round" stroke-linejoin="miter"/><path d="M1038.6 599.6L942.5 599.6" stroke-width="9" stroke-linecap="round" stroke-linejoin="miter"/><path d="M1309.6 576.5L1231.3 576.5L1231.3 916.0L1321.3 916.0L1321.3 876.0" stroke-width="9" stroke-linecap="round" stroke-linejoin="miter"/><path d="M1309.6 663.5L1376.6 663.5" stroke-width="9" stroke-linecap="round" stroke-linejoin="miter"/><path d="M1376.6 663.5L1376.6 809.2" stroke-width="9" stroke-linecap="round" stroke-linejoin="miter"/><path d="M1376.6 809.2L1269.0 809.2L1269.0 841.0" stroke-width="9" stroke-linecap="round" stroke-linejoin="miter"/><path d="M1164.4 663.5L1164.4 862.1" stroke-width="9" stroke-linecap="round" stroke-linejoin="miter"/><path d="M1290.0 605.5L1250.8 605.5L1250.8 715.0" stroke-width="8.3" stroke-linecap="butt" stroke-linejoin="miter"/><path d="M1290.0 634.5L1268.2 634.5L1268.2 688.7L1318.0 688.7L1318.0 712.0" stroke-width="6" stroke-linecap="butt" stroke-linejoin="miter"/></g><rect x="1038.0" y="407.0" width="35" height="35" fill="#3cba8c"/><polygon points="1065.8,428.7 1059.7,434.8 1051.3,434.8 1045.2,428.7 1045.2,420.3 1051.3,414.2 1059.7,414.2 1065.8,420.3" fill="#282828"/><circle cx="1055.5" cy="482.7" r="17.500" fill="#3cba8c"/><polygon points="1065.8,486.9 1059.7,493.0 1051.3,493.0 1045.2,486.9 1045.2,478.5 1051.3,472.4 1059.7,472.4 1065.8,478.5" fill="#282828"/><circle cx="1055.5" cy="541.2" r="17.500" fill="#3cba8c"/><polygon points="1065.8,545.4 1059.7,551.5 1051.3,551.5 1045.2,545.4 1045.2,537.0 1051.3,530.9 1059.7,530.9 1065.8,537.0" fill="#282828"/><circle cx="1055.5" cy="599.6" r="17.500" fill="#3cba8c"/><polygon points="1065.8,603.8 1059.7,609.9 1051.3,609.9 1045.2,603.8 1045.2,595.4 1051.3,589.3 1059.7,589.3 1065.8,595.4" fill="#282828"/><text transform="translate(1002.5,725) scale(0.9680,1)" font-size="58" fill="#a81111" font-family="Liberation Sans">hc-</text><text transform="translate(1003,794.2) scale(0.9965,1)" font-size="57" fill="#a81111" font-family="Liberation Sans">sr04</text><path d="M991 725.5H1016M1003.5 713V735M991 794.7H1016M1003.5 782.2V804.2" stroke="#a81111" stroke-width="1" shape-rendering="crispEdges"/><rect x="654" y="179" width="1245" height="805" fill="url(#hp)" clip-path="url(#hc)"/><path transform="translate(-0.5,-0.5)" d="M1063.9 246.5h31.2a11.5 11.5 0 0 1 11.5 11.5v59.0a11.5 11.5 0 0 1 -11.5 11.5h-31.2a11.5 11.5 0 0 1 -11.5 -11.5v-59.0a11.5 11.5 0 0 1 11.5 -11.5Z M1122.1 246.5h31.2a11.5 11.5 0 0 1 11.5 11.5v59.0a11.5 11.5 0 0 1 -11.5 11.5h-31.2a11.5 11.5 0 0 1 -11.5 -11.5v-59.0a11.5 11.5 0 0 1 11.5 -11.5Z M1180.0 246.5h31.2a11.5 11.5 0 0 1 11.5 11.5v59.0a11.5 11.5 0 0 1 -11.5 11.5h-31.2a11.5 11.5 0 0 1 -11.5 -11.5v-59.0a11.5 11.5 0 0 1 11.5 -11.5Z M1238.8 246.5h31.2a11.5 11.5 0 0 1 11.5 11.5v59.0a11.5 11.5 0 0 1 -11.5 11.5h-31.2a11.5 11.5 0 0 1 -11.5 -11.5v-59.0a11.5 11.5 0 0 1 11.5 -11.5Z M1296.9 246.5h31.2a11.5 11.5 0 0 1 11.5 11.5v59.0a11.5 11.5 0 0 1 -11.5 11.5h-31.2a11.5 11.5 0 0 1 -11.5 -11.5v-59.0a11.5 11.5 0 0 1 11.5 -11.5Z M1355.9 246.5h31.2a11.5 11.5 0 0 1 11.5 11.5v59.0a11.5 11.5 0 0 1 -11.5 11.5h-31.2a11.5 11.5 0 0 1 -11.5 -11.5v-59.0a11.5 11.5 0 0 1 11.5 -11.5Z M1183.0 372.7h31.3a11.5 11.5 0 0 1 11.5 11.5v44.8a11.5 11.5 0 0 1 -11.5 11.5h-31.3a11.5 11.5 0 0 1 -11.5 -11.5v-44.8a11.5 11.5 0 0 1 11.5 -11.5Z M1259.1 373.0h30.6a11.5 11.5 0 0 1 11.5 11.5v44.8a11.5 11.5 0 0 1 -11.5 11.5h-30.6a11.5 11.5 0 0 1 -11.5 -11.5v-44.8a11.5 11.5 0 0 1 11.5 -11.5Z M1189.2 467.3h36.4a11.5 11.5 0 0 1 11.5 11.5v43.0a11.5 11.5 0 0 1 -11.5 11.5h-36.4a11.5 11.5 0 0 1 -11.5 -11.5v-43.0a11.5 11.5 0 0 1 11.5 -11.5Z M1254.2 467.3h36.6a11.5 11.5 0 0 1 11.5 11.5v43.0a11.5 11.5 0 0 1 -11.5 11.5h-36.6a11.5 11.5 0 0 1 -11.5 -11.5v-43.0a11.5 11.5 0 0 1 11.5 -11.5Z M1136.9 560.4h55.4a9.6 9.6 0 0 1 9.6 9.6v13.0a9.6 9.6 0 0 1 -9.6 9.6h-55.4a9.6 9.6 0 0 1 -9.6 -9.6v-13.0a9.6 9.6 0 0 1 9.6 -9.6Z M1281.9 560.4h55.4a9.6 9.6 0 0 1 9.6 9.6v13.0a9.6 9.6 0 0 1 -9.6 9.6h-55.4a9.6 9.6 0 0 1 -9.6 -9.6v-13.0a9.6 9.6 0 0 1 9.6 -9.6Z M1136.9 589.4h55.4a9.6 9.6 0 0 1 9.6 9.6v13.0a9.6 9.6 0 0 1 -9.6 9.6h-55.4a9.6 9.6 0 0 1 -9.6 -9.6v-13.0a9.6 9.6 0 0 1 9.6 -9.6Z M1281.9 589.4h55.4a9.6 9.6 0 0 1 9.6 9.6v13.0a9.6 9.6 0 0 1 -9.6 9.6h-55.4a9.6 9.6 0 0 1 -9.6 -9.6v-13.0a9.6 9.6 0 0 1 9.6 -9.6Z M1136.9 618.4h55.4a9.6 9.6 0 0 1 9.6 9.6v13.0a9.6 9.6 0 0 1 -9.6 9.6h-55.4a9.6 9.6 0 0 1 -9.6 -9.6v-13.0a9.6 9.6 0 0 1 9.6 -9.6Z M1281.9 618.4h55.4a9.6 9.6 0 0 1 9.6 9.6v13.0a9.6 9.6 0 0 1 -9.6 9.6h-55.4a9.6 9.6 0 0 1 -9.6 -9.6v-13.0a9.6 9.6 0 0 1 9.6 -9.6Z M1136.9 647.4h55.4a9.6 9.6 0 0 1 9.6 9.6v13.0a9.6 9.6 0 0 1 -9.6 9.6h-55.4a9.6 9.6 0 0 1 -9.6 -9.6v-13.0a9.6 9.6 0 0 1 9.6 -9.6Z M1281.9 647.4h55.4a9.6 9.6 0 0 1 9.6 9.6v13.0a9.6 9.6 0 0 1 -9.6 9.6h-55.4a9.6 9.6 0 0 1 -9.6 -9.6v-13.0a9.6 9.6 0 0 1 9.6 -9.6Z M1185.8 695.2h31.0a11.5 11.5 0 0 1 11.5 11.5v59.6a11.5 11.5 0 0 1 -11.5 11.5h-31.0a11.5 11.5 0 0 1 -11.5 -11.5v-59.6a11.5 11.5 0 0 1 11.5 -11.5Z M1185.8 821.2h31.0a11.5 11.5 0 0 1 11.5 11.5v59.6a11.5 11.5 0 0 1 -11.5 11.5h-31.0a11.5 11.5 0 0 1 -11.5 -11.5v-59.6a11.5 11.5 0 0 1 11.5 -11.5Z M1244.4 695.2h31.0a11.5 11.5 0 0 1 11.5 11.5v59.6a11.5 11.5 0 0 1 -11.5 11.5h-31.0a11.5 11.5 0 0 1 -11.5 -11.5v-59.6a11.5 11.5 0 0 1 11.5 -11.5Z M1244.4 821.2h31.0a11.5 11.5 0 0 1 11.5 11.5v59.6a11.5 11.5 0 0 1 -11.5 11.5h-31.0a11.5 11.5 0 0 1 -11.5 -11.5v-59.6a11.5 11.5 0 0 1 11.5 -11.5Z M1303.0 695.2h31.0a11.5 11.5 0 0 1 11.5 11.5v59.6a11.5 11.5 0 0 1 -11.5 11.5h-31.0a11.5 11.5 0 0 1 -11.5 -11.5v-59.6a11.5 11.5 0 0 1 11.5 -11.5Z M1303.0 821.2h31.0a11.5 11.5 0 0 1 11.5 11.5v59.6a11.5 11.5 0 0 1 -11.5 11.5h-31.0a11.5 11.5 0 0 1 -11.5 -11.5v-59.6a11.5 11.5 0 0 1 11.5 -11.5Z M1064.0 287.5A15.5 15.5 0 0 1 1095.0 287.5L1095.0 363.5A15.5 15.5 0 0 1 1064.0 363.5Z M942.5 379.0A15.5 15.5 0 0 1 942.5 348.0L1137.7 348.0A15.5 15.5 0 0 1 1137.7 379.0Z M927.0 363.5A15.5 15.5 0 0 1 958.0 363.5L958.0 862.1A15.5 15.5 0 0 1 927.0 862.1Z M942.5 877.6A15.5 15.5 0 0 1 942.5 846.6L1164.4 846.6A15.5 15.5 0 0 1 1164.4 877.6Z M1164.4 877.6A15.5 15.5 0 0 1 1164.4 846.6L1178.6 846.6A15.5 15.5 0 0 1 1178.6 877.6Z M1178.6 877.6A15.5 15.5 0 0 1 1178.6 846.6L1201.3 846.6A15.5 15.5 0 0 1 1201.3 877.6Z M1122.2 363.5A15.5 15.5 0 0 1 1153.2 363.5L1153.2 407.0A15.5 15.5 0 0 1 1122.2 407.0Z M1137.7 422.5A15.5 15.5 0 0 1 1137.7 391.5L1198.7 391.5A15.5 15.5 0 0 1 1198.7 422.5Z M1065.0 451.9A15.5 15.5 0 0 1 1065.0 420.9L1137.7 420.9A15.5 15.5 0 0 1 1137.7 451.9Z M1122.2 436.4A15.5 15.5 0 0 1 1153.2 436.4L1153.2 456.6A15.5 15.5 0 0 1 1122.2 456.6Z M1137.7 472.1A15.5 15.5 0 0 1 1137.7 441.1L1272.3 441.1A15.5 15.5 0 0 1 1272.3 472.1Z M1180.1 289.0A15.5 15.5 0 0 1 1211.1 289.0L1211.1 297.0A15.5 15.5 0 0 1 1180.1 297.0Z M1180.1 297.0A15.5 15.5 0 0 1 1211.1 297.0L1211.1 306.5A15.5 15.5 0 0 1 1180.1 306.5Z M1180.1 306.5A15.5 15.5 0 0 1 1211.1 306.5L1211.1 351.4A15.5 15.5 0 0 1 1180.1 351.4Z M1195.6 366.9A15.5 15.5 0 0 1 1195.6 335.9L1272.3 335.9A15.5 15.5 0 0 1 1272.3 366.9Z M1256.8 351.4A15.5 15.5 0 0 1 1287.8 351.4L1287.8 456.6A15.5 15.5 0 0 1 1256.8 456.6Z M1256.8 456.6A15.5 15.5 0 0 1 1287.8 456.6L1287.8 500.3A15.5 15.5 0 0 1 1256.8 500.3Z M1296.9 289.0A15.5 15.5 0 0 1 1327.9 289.0L1327.9 297.0A15.5 15.5 0 0 1 1296.9 297.0Z M1296.9 297.0A15.5 15.5 0 0 1 1327.9 297.0L1327.9 306.5A15.5 15.5 0 0 1 1296.9 306.5Z M1296.9 306.5A15.5 15.5 0 0 1 1327.9 306.5L1327.9 354.3A15.5 15.5 0 0 1 1296.9 354.3Z M1312.4 369.8A15.5 15.5 0 0 1 1312.4 338.8L1376.5 338.8A15.5 15.5 0 0 1 1376.5 369.8Z M1361.0 354.3A15.5 15.5 0 0 1 1392.0 354.3L1392.0 605.5A15.5 15.5 0 0 1 1361.0 605.5Z M1376.5 590.0A15.5 15.5 0 0 1 1376.5 621.0L1309.6 621.0A15.5 15.5 0 0 1 1309.6 590.0Z M1272.5 516.2A15.5 15.5 0 0 1 1272.5 485.2L1309.6 485.2A15.5 15.5 0 0 1 1309.6 516.2Z M1294.1 500.7A15.5 15.5 0 0 1 1325.1 500.7L1325.1 576.5A15.5 15.5 0 0 1 1294.1 576.5Z M1191.9 500.3A15.5 15.5 0 0 1 1222.9 500.3L1222.9 576.5A15.5 15.5 0 0 1 1191.9 576.5Z M1191.9 576.5A15.5 15.5 0 0 1 1222.9 576.5L1222.9 720.0A15.5 15.5 0 0 1 1191.9 720.0Z M1191.9 720.0A15.5 15.5 0 0 1 1222.9 720.0L1222.9 736.5A15.5 15.5 0 0 1 1191.9 736.5Z M1207.4 561.0A15.5 15.5 0 0 1 1207.4 592.0L1181.0 592.0A15.5 15.5 0 0 1 1181.0 561.0Z M1181.0 561.0A15.5 15.5 0 0 1 1181.0 592.0L1164.6 592.0A15.5 15.5 0 0 1 1164.6 561.0Z M1072.4 498.2A15.5 15.5 0 0 1 1072.4 467.2L1122.5 467.2A15.5 15.5 0 0 1 1122.5 498.2Z M1107.0 482.7A15.5 15.5 0 0 1 1138.0 482.7L1138.0 605.5A15.5 15.5 0 0 1 1107.0 605.5Z M1122.5 621.0A15.5 15.5 0 0 1 1122.5 590.0L1164.6 590.0A15.5 15.5 0 0 1 1164.6 621.0Z M1072.4 556.7A15.5 15.5 0 0 1 1072.4 525.7L1099.7 525.7A15.5 15.5 0 0 1 1099.7 556.7Z M1084.2 541.2A15.5 15.5 0 0 1 1115.2 541.2L1115.2 634.5A15.5 15.5 0 0 1 1084.2 634.5Z M1099.7 650.0A15.5 15.5 0 0 1 1099.7 619.0L1164.6 619.0A15.5 15.5 0 0 1 1164.6 650.0Z M1038.6 584.1A15.5 15.5 0 0 1 1038.6 615.1L942.5 615.1A15.5 15.5 0 0 1 942.5 584.1Z M1309.6 561.0A15.5 15.5 0 0 1 1309.6 592.0L1231.3 592.0A15.5 15.5 0 0 1 1231.3 561.0Z M1215.8 576.5A15.5 15.5 0 0 1 1246.8 576.5L1246.8 916.0A15.5 15.5 0 0 1 1215.8 916.0Z M1231.3 931.5A15.5 15.5 0 0 1 1231.3 900.5L1321.3 900.5A15.5 15.5 0 0 1 1321.3 931.5Z M1336.8 916.0A15.5 15.5 0 0 1 1305.8 916.0L1305.8 876.0A15.5 15.5 0 0 1 1336.8 876.0Z M1309.6 679.0A15.5 15.5 0 0 1 1309.6 648.0L1376.6 648.0A15.5 15.5 0 0 1 1376.6 679.0Z M1376.6 793.7A15.5 15.5 0 0 1 1376.6 824.7L1269.0 824.7A15.5 15.5 0 0 1 1269.0 793.7Z M1253.5 809.2A15.5 15.5 0 0 1 1284.5 809.2L1284.5 841.0A15.5 15.5 0 0 1 1253.5 841.0Z M1038.8 395.8h33.9a12.0 12.0 0 0 1 12.0 12.0v33.9a12.0 12.0 0 0 1 -12.0 12.0h-33.9a12.0 12.0 0 0 1 -12.0 -12.0v-33.9a12.0 12.0 0 0 1 12.0 -12.0Z M1026.3 482.7a29.2 29.2 0 1 1 58.4 0a29.2 29.2 0 1 1 -58.4 0Z M1026.3 541.2a29.2 29.2 0 1 1 58.4 0a29.2 29.2 0 1 1 -58.4 0Z M1026.3 599.6a29.2 29.2 0 1 1 58.4 0a29.2 29.2 0 1 1 -58.4 0Z M990 667.3H1098.4V739.3H990Z M990 737.3H1131.4V809.3H990Z" fill="none" stroke="#ff3000" stroke-width="1" shape-rendering="crispEdges"/><g stroke="#e8e8e8" stroke-width="1" stroke-dasharray="1 1" shape-rendering="crispEdges"><path d="M1436.500 256.500h20M1446.500 246.500v20"/><path d="M883.500 955.500h20M892.500 946.500v20"/></g></svg>
<div class="r" style="left:1869px;top:188px;width:27px;height:145px;background:#454545;"></div>
<div class="t" style="left:1892px;top:219.3px;transform-origin:0 0;transform:rotate(90deg) scale(1,1.2);font-size:11.0px;line-height:16px;font-weight:bold;color:#f4f4f4;letter-spacing:0.348px">MANUFACTURING</div>
<svg style="left:1874px;top:195.500px" width="18" height="17"><rect x="0.500" y="0.500" width="16.500" height="15.500" rx="2" fill="#1e9e4a"/><rect x="4.500" y="5" width="8.500" height="6.500" fill="none" stroke="#e8e23a" stroke-width="1.300"/><path d="M6 3.500v1.500M8.700 3.500v1.500M11.400 3.500v1.500M6 11.500v1.500M8.700 11.500v1.500M11.400 11.500v1.500" stroke="#e8e23a" stroke-width="1"/></svg>
<div class="r" style="left:1869px;top:349px;width:27px;height:146px;background:#454545;"></div>
<div class="t" style="left:1892px;top:394px;transform-origin:0 0;transform:rotate(90deg) scale(1,1.2);font-size:11.0px;line-height:16px;font-weight:bold;color:#f4f4f4;letter-spacing:0.703px">FUSION 360</div>
<svg style="left:1874px;top:367.5px" width="18" height="17"><rect x="0.500" y="0.500" width="16.500" height="15.500" rx="2" fill="#f39c12"/><path d="M5 12.500v-8.500h7.500v2.200h-4.800v1.800h3.800v2h-3.800v2.500z" fill="#555" /><path d="M5 4h7.500v2.200h-4.800z" fill="#777"/></svg>
<div class="r" style="left:1869px;top:510px;width:27px;height:146px;background:#454545;"></div>
<div class="t" style="left:1892px;top:556.7px;transform-origin:0 0;transform:rotate(90deg) scale(1,1.2);font-size:11.0px;line-height:16px;font-weight:bold;color:#f4f4f4;letter-spacing:0.020px">FUSION TEAM</div>
<svg style="left:1874px;top:528.5px" width="18" height="17"><rect x="0.500" y="0.500" width="16.500" height="15.500" rx="2" fill="#f39c12"/><path d="M5 12.500v-8.500h7.500v2.200h-4.800v1.800h3.800v2h-3.800v2.500z" fill="#555" /><path d="M5 4h7.500v2.200h-4.800z" fill="#777"/></svg>
<div class="r" style="left:8px;top:1px;width:410px;height:807px;background:#f0f0f0;box-shadow:0 0 14px 2px rgba(0,0,0,0.450);"></div>
<div class="r" style="left:8px;top:1px;width:410px;height:38px;background:#7a7574;"></div>
<div class="r" style="left:8px;top:39px;width:1px;height:769px;background:#7f7a79;"></div>
<div class="r" style="left:417px;top:39px;width:1px;height:769px;background:#7f7a79;"></div>
<div class="r" style="left:8px;top:807px;width:410px;height:1px;background:#7f7a79;"></div>
<svg style="left:18px;top:9px" width="22" height="24"><path d="M3.500 1.500h15v19h-15z" fill="#fff"/><path d="M18.500 14.500v6h-6z" fill="#777"/><rect x="1.200" y="3.500" width="17.800" height="10" fill="#179a3c"/><text x="10.100" y="12" font-size="8.500" fill="#fff" text-anchor="middle" font-family="Liberation Sans" textLength="15.500" lengthAdjust="spacingAndGlyphs">BRD</text></svg>
<div class="t" style="left:43.0px;top:9.8px;font-size:15px;line-height:21px;letter-spacing:-0.294px;color:#ffffff;font-weight:normal;">Visible Layers</div>
<svg style="left:388px;top:12px" width="16" height="16"><path d="M2 2l12 12M14 2l-12 12" stroke="#fff" stroke-width="1.200"/></svg>
<div class="r" style="left:22.5px;top:70.5px;width:381px;height:678px;background:#f5f5f5;border:1px solid #dedede;border-radius:3px;"></div>
<div class="t" style="left:34.0px;top:88.1px;font-size:12px;line-height:17px;letter-spacing:-0.071px;color:#1a1a1a;font-weight:normal;">Filter:</div>
<div class="r" style="left:75px;top:82px;width:116.5px;height:26px;background:#ffffff;border:1px solid #8a8a8a;"></div>
<div class="t" style="left:80.0px;top:88.1px;font-size:12px;line-height:17px;letter-spacing:-0.269px;color:#1a1a1a;font-weight:normal;">All Layers</div>
<svg style="left:177px;top:91px" width="10" height="8"><path d="M1 1h7l-3.500 5z" fill="#444"/></svg>
<div class="r" style="left:34px;top:115px;width:358px;height:546px;background:#ffffff;border:1px solid #0a84d8;"></div>
<div class="r" style="left:77px;top:117px;width:1px;height:29px;background:#e0e0e0;"></div>
<div class="r" style="left:116px;top:117px;width:1px;height:29px;background:#e0e0e0;"></div>
<div class="r" style="left:155px;top:117px;width:1px;height:29px;background:#e0e0e0;"></div>
<div class="r" style="left:326px;top:117px;width:1px;height:29px;background:#e0e0e0;"></div>
<div class="r" style="left:369px;top:117px;width:1px;height:29px;background:#e0e0e0;"></div>
<svg style="left:38.5px;top:124px" width="18" height="14" fill="none" stroke="#555" stroke-width="0.900"><ellipse cx="9" cy="7" rx="7.500" ry="5.600"/><circle cx="9" cy="7" r="3.600" stroke="#888"/><circle cx="9" cy="7" r="2" fill="#666" stroke="none"/></svg>
<div class="t" style="left:96.2px;top:124.3px;font-size:12px;line-height:17px;letter-spacing:0.112px;color:#1a1a1a;font-weight:normal;">#</div>
<div class="t" style="left:161.2px;top:124.3px;font-size:12px;line-height:17px;letter-spacing:-0.504px;color:#1a1a1a;font-weight:normal;">Name</div>
<svg style="left:338px;top:127px" width="9" height="9"><path d="M1.500 1.500l6 6M7.500 1.500l-6 6" stroke="#6e6e6e" stroke-width="1.800"/></svg>
<svg style="left:34px;top:116px;overflow:hidden" width="358" height="545" viewBox="34 116 358 545"><defs><pattern id="f1" width="8" height="8" patternUnits="userSpaceOnUse"><rect width="8" height="8" fill="#000"/><path d="M-2 10L10 -2M-2 2L2 -2M6 10L10 6" stroke="#d8d8d8" stroke-width="0.9"/></pattern><pattern id="b1" width="8" height="8" patternUnits="userSpaceOnUse"><rect width="8" height="8" fill="#000"/><path d="M-2 -2L10 10M6 -2L10 2M-2 6L2 10" stroke="#d8d8d8" stroke-width="0.9"/></pattern><pattern id="f2" width="8" height="8" patternUnits="userSpaceOnUse"><rect width="8" height="8" fill="#000"/><path d="M-2 10L10 -2M-2 2L2 -2M6 10L10 6" stroke="#b4b4b4" stroke-width="2.4"/></pattern><pattern id="b2" width="8" height="8" patternUnits="userSpaceOnUse"><rect width="8" height="8" fill="#000"/><path d="M-2 -2L10 10M6 -2L10 2M-2 6L2 10" stroke="#b4b4b4" stroke-width="2.4"/></pattern><pattern id="fy" width="8" height="8" patternUnits="userSpaceOnUse"><rect width="8" height="8" fill="#000"/><path d="M-2 10L10 -2M-2 2L2 -2M6 10L10 6" stroke="#e0d020" stroke-width="0.9"/></pattern><pattern id="by" width="8" height="8" patternUnits="userSpaceOnUse"><rect width="8" height="8" fill="#000"/><path d="M-2 -2L10 10M6 -2L10 2M-2 6L2 10" stroke="#e0d020" stroke-width="0.9"/></pattern><pattern id="dr" width="4" height="4" patternUnits="userSpaceOnUse"><rect width="4" height="4" fill="#000"/><rect x="1" y="0" width="1" height="1" fill="#e01010"/><rect x="3" y="2" width="1" height="1" fill="#e01010"/></pattern><pattern id="db" width="4" height="4" patternUnits="userSpaceOnUse"><rect width="4" height="4" fill="#000"/><rect x="1" y="0" width="1" height="1" fill="#1a9af0"/><rect x="3" y="2" width="1" height="1" fill="#1a9af0"/></pattern></defs><rect x="120" y="148.5" width="16" height="15.500" fill="#a01010"/><rect x="35" y="166" width="335" height="20" fill="#f7f7f7"/><rect x="120" y="168.5" width="16" height="15.500" fill="#0b72b0"/><rect x="120" y="188.5" width="16" height="15.500" fill="#2fb37c"/><rect x="35" y="206" width="335" height="20" fill="#f7f7f7"/><rect x="120" y="208.5" width="16" height="15.500" fill="#2fb37c"/><rect x="120" y="228.5" width="16" height="15.500" fill="#a39c22"/><rect x="35" y="246" width="335" height="20" fill="#f7f7f7"/><rect x="120" y="248.5" width="16" height="15.500" fill="#d60000"/><rect x="120" y="268.5" width="16" height="15.500" fill="#9c9c9c"/><rect x="35" y="286" width="335" height="20" fill="#f7f7f7"/><rect x="120" y="288.5" width="16" height="15.500" fill="#9c9c9c"/><rect x="120" y="308.5" width="16" height="15.500" fill="#8fa91f"/><rect x="35" y="326" width="335" height="20" fill="#f7f7f7"/><rect x="120" y="328.5" width="16" height="15.500" fill="#8fa91f"/><rect x="120" y="348.5" width="16" height="15.500" fill="#9c9c9c"/><rect x="35" y="366" width="335" height="20" fill="#f7f7f7"/><rect x="120" y="368.5" width="16" height="15.500" fill="#9c9c9c"/><rect x="120" y="388.5" width="16" height="15.500" fill="#9c9c9c"/><rect x="35" y="406" width="335" height="20" fill="#f7f7f7"/><rect x="120" y="408.5" width="16" height="15.500" fill="#9c9c9c"/><rect x="120" y="428.5" width="16" height="15.500" fill="url(#f1)"/><rect x="35" y="446" width="335" height="20" fill="#f7f7f7"/><rect x="120" y="448.5" width="16" height="15.500" fill="url(#b1)"/><rect x="120" y="468.5" width="16" height="15.500" fill="url(#f2)"/><rect x="35" y="486" width="335" height="20" fill="#f7f7f7"/><rect x="120" y="488.5" width="16" height="15.500" fill="url(#b2)"/><rect x="120" y="508.5" width="16" height="15.500" fill="url(#fy)" stroke="#d4c820" stroke-width="1"/><rect x="35" y="526" width="335" height="20" fill="#f7f7f7"/><rect x="120" y="528.5" width="16" height="15.500" fill="url(#by)" stroke="#d4c820" stroke-width="1"/><rect x="120" y="548.5" width="16" height="15.500" fill="url(#f2)"/><rect x="35" y="566" width="335" height="20" fill="#f7f7f7"/><rect x="120" y="568.5" width="16" height="15.500" fill="url(#b2)"/><rect x="120" y="588.5" width="16" height="15.500" fill="#9c9c9c"/><rect x="35" y="606" width="335" height="20" fill="#f7f7f7"/><rect x="120" y="608.5" width="16" height="15.500" fill="#9c9c9c"/><rect x="120" y="628.5" width="16" height="15.500" fill="url(#dr)" stroke="#d00000" stroke-width="1"/><rect x="35" y="646" width="335" height="20" fill="#f7f7f7"/><rect x="120" y="648.5" width="16" height="15.500" fill="url(#db)" stroke="#0a80d0" stroke-width="1"/></svg>
<div class="r" style="left:34px;top:116px;width:358px;height:545px;overflow:hidden;background:transparent;">
<div class="t" style="left:72.3px;top:29.7px;font-size:12px;line-height:17px;letter-spacing:0.468px;color:#1a1a1a;font-weight:normal;">1</div>
<div class="t" style="left:125.0px;top:33.1px;font-size:12px;line-height:17px;letter-spacing:0.658px;color:#1a1a1a;font-weight:normal;">Top</div>
<div class="t" style="left:65.2px;top:49.7px;font-size:12px;line-height:17px;letter-spacing:0.468px;color:#1a1a1a;font-weight:normal;">16</div>
<div class="t" style="left:125.0px;top:53.1px;font-size:12px;line-height:17px;letter-spacing:0.553px;color:#1a1a1a;font-weight:normal;">Bottom</div>
<div class="t" style="left:65.2px;top:69.7px;font-size:12px;line-height:17px;letter-spacing:0.468px;color:#1a1a1a;font-weight:normal;">17</div>
<div class="t" style="left:125.0px;top:73.1px;font-size:12px;line-height:17px;letter-spacing:-0.507px;color:#1a1a1a;font-weight:normal;">Pads</div>
<div class="t" style="left:65.2px;top:89.7px;font-size:12px;line-height:17px;letter-spacing:0.468px;color:#1a1a1a;font-weight:normal;">18</div>
<div class="t" style="left:125.0px;top:93.1px;font-size:12px;line-height:17px;letter-spacing:-0.452px;color:#1a1a1a;font-weight:normal;">Vias</div>
<div class="t" style="left:65.2px;top:109.7px;font-size:12px;line-height:17px;letter-spacing:0.468px;color:#1a1a1a;font-weight:normal;">19</div>
<div class="t" style="left:125.0px;top:113.1px;font-size:12px;line-height:17px;letter-spacing:0.286px;color:#1a1a1a;font-weight:normal;">Unrouted</div>
<div class="t" style="left:65.2px;top:129.7px;font-size:12px;line-height:17px;letter-spacing:0.468px;color:#1a1a1a;font-weight:normal;">20</div>
<div class="t" style="left:125.0px;top:133.1px;font-size:12px;line-height:17px;letter-spacing:-0.226px;color:#1a1a1a;font-weight:normal;">Dimension</div>
<div class="t" style="left:65.2px;top:149.7px;font-size:12px;line-height:17px;letter-spacing:0.468px;color:#1a1a1a;font-weight:normal;">21</div>
<div class="t" style="left:125.0px;top:153.1px;font-size:12px;line-height:17px;letter-spacing:-0.115px;color:#1a1a1a;font-weight:normal;">tPlace</div>
<div class="t" style="left:65.2px;top:169.7px;font-size:12px;line-height:17px;letter-spacing:0.468px;color:#1a1a1a;font-weight:normal;">22</div>
<div class="t" style="left:125.0px;top:173.1px;font-size:12px;line-height:17px;letter-spacing:-0.339px;color:#1a1a1a;font-weight:normal;">bPlace</div>
<div class="t" style="left:65.2px;top:189.7px;font-size:12px;line-height:17px;letter-spacing:0.468px;color:#1a1a1a;font-weight:normal;">23</div>
<div class="t" style="left:125.0px;top:193.1px;font-size:12px;line-height:17px;letter-spacing:-0.001px;color:#1a1a1a;font-weight:normal;">tOrigins</div>
<div class="t" style="left:65.2px;top:209.7px;font-size:12px;line-height:17px;letter-spacing:0.468px;color:#1a1a1a;font-weight:normal;">24</div>
<div class="t" style="left:125.0px;top:213.1px;font-size:12px;line-height:17px;letter-spacing:-0.169px;color:#1a1a1a;font-weight:normal;">bOrigins</div>
<div class="t" style="left:65.2px;top:229.7px;font-size:12px;line-height:17px;letter-spacing:0.468px;color:#1a1a1a;font-weight:normal;">25</div>
<div class="t" style="left:125.0px;top:233.1px;font-size:12px;line-height:17px;letter-spacing:-0.002px;color:#1a1a1a;font-weight:normal;">tNames</div>
<div class="t" style="left:65.2px;top:249.7px;font-size:12px;line-height:17px;letter-spacing:0.468px;color:#1a1a1a;font-weight:normal;">26</div>
<div class="t" style="left:125.0px;top:253.1px;font-size:12px;line-height:17px;letter-spacing:-0.226px;color:#1a1a1a;font-weight:normal;">bNames</div>
<div class="t" style="left:65.2px;top:269.7px;font-size:12px;line-height:17px;letter-spacing:0.468px;color:#1a1a1a;font-weight:normal;">27</div>
<div class="t" style="left:125.0px;top:273.1px;font-size:12px;line-height:17px;letter-spacing:0.170px;color:#1a1a1a;font-weight:normal;">tValues</div>
<div class="t" style="left:65.2px;top:289.7px;font-size:12px;line-height:17px;letter-spacing:0.468px;color:#1a1a1a;font-weight:normal;">28</div>
<div class="t" style="left:125.0px;top:293.1px;font-size:12px;line-height:17px;letter-spacing:-0.022px;color:#1a1a1a;font-weight:normal;">bValues</div>
<div class="t" style="left:65.2px;top:309.7px;font-size:12px;line-height:17px;letter-spacing:0.468px;color:#1a1a1a;font-weight:normal;">29</div>
<div class="t" style="left:125.0px;top:313.1px;font-size:12px;line-height:17px;letter-spacing:0.527px;color:#1a1a1a;font-weight:normal;">tStop</div>
<div class="t" style="left:65.2px;top:329.7px;font-size:12px;line-height:17px;letter-spacing:0.468px;color:#1a1a1a;font-weight:normal;">30</div>
<div class="t" style="left:125.0px;top:333.1px;font-size:12px;line-height:17px;letter-spacing:0.261px;color:#1a1a1a;font-weight:normal;">bStop</div>
<div class="t" style="left:65.2px;top:349.7px;font-size:12px;line-height:17px;letter-spacing:0.468px;color:#1a1a1a;font-weight:normal;">31</div>
<div class="t" style="left:125.0px;top:353.1px;font-size:12px;line-height:17px;letter-spacing:0.054px;color:#1a1a1a;font-weight:normal;">tCream</div>
<div class="t" style="left:65.2px;top:369.7px;font-size:12px;line-height:17px;letter-spacing:0.468px;color:#1a1a1a;font-weight:normal;">32</div>
<div class="t" style="left:125.0px;top:373.1px;font-size:12px;line-height:17px;letter-spacing:-0.170px;color:#1a1a1a;font-weight:normal;">bCream</div>
<div class="t" style="left:65.2px;top:389.7px;font-size:12px;line-height:17px;letter-spacing:0.468px;color:#1a1a1a;font-weight:normal;">33</div>
<div class="t" style="left:125.0px;top:393.1px;font-size:12px;line-height:17px;letter-spacing:-0.240px;color:#1a1a1a;font-weight:normal;">tFinish</div>
<div class="t" style="left:65.2px;top:409.7px;font-size:12px;line-height:17px;letter-spacing:0.468px;color:#1a1a1a;font-weight:normal;">34</div>
<div class="t" style="left:125.0px;top:413.1px;font-size:12px;line-height:17px;letter-spacing:-0.432px;color:#1a1a1a;font-weight:normal;">bFinish</div>
<div class="t" style="left:65.2px;top:429.7px;font-size:12px;line-height:17px;letter-spacing:0.468px;color:#1a1a1a;font-weight:normal;">35</div>
<div class="t" style="left:125.0px;top:433.1px;font-size:12px;line-height:17px;letter-spacing:-0.004px;color:#1a1a1a;font-weight:normal;">tGlue</div>
<div class="t" style="left:65.2px;top:449.7px;font-size:12px;line-height:17px;letter-spacing:0.468px;color:#1a1a1a;font-weight:normal;">36</div>
<div class="t" style="left:125.0px;top:453.1px;font-size:12px;line-height:17px;letter-spacing:-0.273px;color:#1a1a1a;font-weight:normal;">bGlue</div>
<div class="t" style="left:65.2px;top:469.7px;font-size:12px;line-height:17px;letter-spacing:0.468px;color:#1a1a1a;font-weight:normal;">37</div>
<div class="t" style="left:125.0px;top:473.1px;font-size:12px;line-height:17px;letter-spacing:0.931px;color:#1a1a1a;font-weight:normal;">tTest</div>
<div class="t" style="left:65.2px;top:489.7px;font-size:12px;line-height:17px;letter-spacing:0.468px;color:#1a1a1a;font-weight:normal;">38</div>
<div class="t" style="left:125.0px;top:493.1px;font-size:12px;line-height:17px;letter-spacing:0.662px;color:#1a1a1a;font-weight:normal;">bTest</div>
<div class="t" style="left:65.2px;top:509.7px;font-size:12px;line-height:17px;letter-spacing:0.468px;color:#1a1a1a;font-weight:normal;">39</div>
<div class="t" style="left:125.0px;top:513.1px;font-size:12px;line-height:17px;letter-spacing:0.494px;color:#1a1a1a;font-weight:normal;">tKeepout</div>
<div class="t" style="left:65.2px;top:529.7px;font-size:12px;line-height:17px;letter-spacing:0.468px;color:#1a1a1a;font-weight:normal;">40</div>
<div class="t" style="left:125.0px;top:533.1px;font-size:12px;line-height:17px;letter-spacing:0.326px;color:#1a1a1a;font-weight:normal;">bKeepout</div>
</div>
<svg style="left:37px;top:149px" width="18" height="14" fill="none" stroke="#555" stroke-width="0.900"><ellipse cx="9" cy="7" rx="7.500" ry="5.600"/><circle cx="9" cy="7" r="3.600" stroke="#888"/><circle cx="9" cy="7" r="2" fill="#666" stroke="none"/></svg>
<svg style="left:37px;top:189px" width="18" height="14" fill="none" stroke="#555" stroke-width="0.900"><ellipse cx="9" cy="7" rx="7.500" ry="5.600"/><circle cx="9" cy="7" r="3.600" stroke="#888"/><circle cx="9" cy="7" r="2" fill="#666" stroke="none"/></svg>
<div class="r" style="left:35px;top:186px;width:335px;height:20px;background:transparent;border:1px dotted #222;"></div>
<div class="r" style="left:370px;top:117px;width:21px;height:543px;background:#f0f0f0;"></div>
<div class="r" style="left:371px;top:138px;width:19px;height:120px;background:#cdcdcd;"></div>
<svg style="left:370px;top:117px" width="21" height="543" fill="none" stroke="#444" stroke-width="1.800"><path d="M5.500 13l5-5 5 5"/><path d="M5.500 529l5 5 5-5"/></svg>
<div class="r" style="left:34px;top:660px;width:358px;height:1px;background:#0a84d8;"></div>
<div class="r" style="left:34px;top:668px;width:76px;height:26px;background:#ffffff;border:1px solid #8c8c8c;border-radius:4px;"></div>
<div class="t" style="left:43.0px;top:673.6px;font-size:12px;line-height:17px;letter-spacing:0.071px;color:#1a1a1a;font-weight:normal;">New Layer</div>
<div class="r" style="left:218px;top:668px;width:87px;height:26px;background:#ffffff;border:1px solid #8c8c8c;border-radius:4px;"></div>
<div class="t" style="left:227.0px;top:673.6px;font-size:12px;line-height:17px;letter-spacing:-0.007px;color:#1a1a1a;font-weight:normal;">Show Layers</div>
<div class="r" style="left:312px;top:668px;width:80px;height:26px;background:#ffffff;border:1px solid #8c8c8c;border-radius:4px;"></div>
<div class="t" style="left:321.0px;top:673.6px;font-size:12px;line-height:17px;letter-spacing:-0.157px;color:#1a1a1a;font-weight:normal;">Hide Layers</div>
<div class="r" style="left:34px;top:701px;width:358px;height:1px;background:#a8a8a8;"></div>
<div class="r" style="left:34px;top:711px;width:87px;height:26px;background:#ffffff;border:1px solid #8a8a8a;"></div>
<div class="t" style="left:38.7px;top:716.8px;font-size:12px;line-height:17px;letter-spacing:0.013px;color:#1a1a1a;font-weight:normal;">Layer Sets</div>
<svg style="left:107px;top:720.500px" width="10" height="8"><path d="M1 1h7l-3.500 5z" fill="#444"/></svg>
<div class="r" style="left:234px;top:711px;width:66px;height:26px;background:#ffffff;border:1px solid #8c8c8c;border-radius:4px;"></div>
<div class="t" style="left:243.0px;top:716.6px;font-size:12px;line-height:17px;letter-spacing:0.377px;color:#1a1a1a;font-weight:normal;">New Set</div>
<div class="r" style="left:307px;top:711px;width:85px;height:26px;background:#ffffff;border:1px solid #8c8c8c;border-radius:4px;"></div>
<div class="t" style="left:315.8px;top:716.6px;font-size:12px;line-height:17px;letter-spacing:0.147px;color:#1a1a1a;font-weight:normal;">Remove Set</div>
<div class="r" style="left:239px;top:766.5px;width:80px;height:27.0px;background:#ffffff;border:2px solid #0a7fd6;border-radius:4px;"></div>
<div class="t" style="left:271.3px;top:772.6px;font-size:12px;line-height:17px;letter-spacing:-0.822px;color:#1a1a1a;font-weight:normal;">OK</div>
<div class="r" style="left:326px;top:767.5px;width:78px;height:25.0px;background:#ffffff;border:1px solid #8c8c8c;border-radius:4px;"></div>
<div class="t" style="left:347.0px;top:772.6px;font-size:12px;line-height:17px;letter-spacing:-0.260px;color:#1a1a1a;font-weight:normal;">Cancel</div>
</body></html>
